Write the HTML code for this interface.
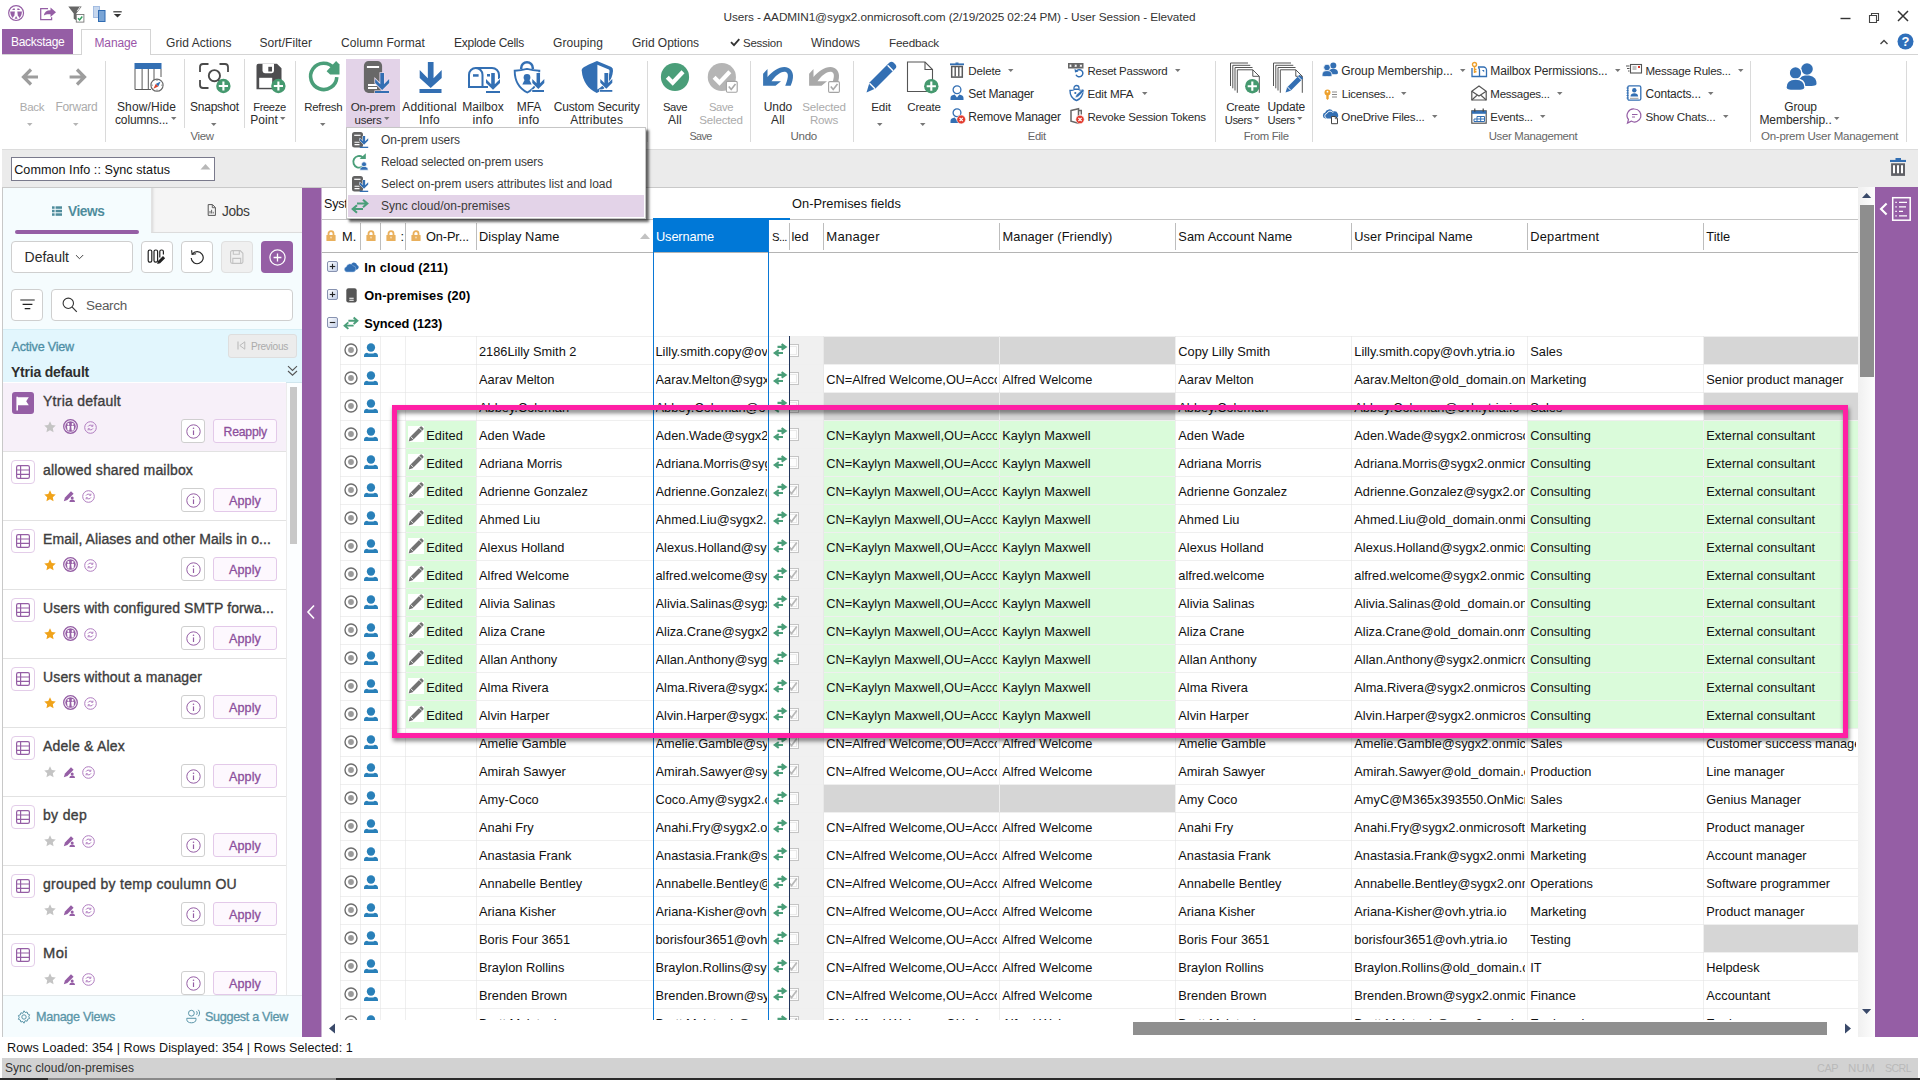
<!DOCTYPE html>
<html lang="en"><head><meta charset="utf-8"><title>Users - User Session</title>
<style>
html,body{margin:0;padding:0;}
body{width:1920px;height:1080px;position:relative;overflow:hidden;background:#fff;font-family:"Liberation Sans",sans-serif;color:#222;}
.a{position:absolute;box-sizing:border-box;}
.t{position:absolute;white-space:nowrap;line-height:16px;height:16px;color:#262626;}
.c{overflow:hidden;}
svg{overflow:visible;}
</style>
</head>
<body>
<div class="t" style="top:9px;font-size:11.8px;letter-spacing:-0.098px;left:723.50px;color:#333;">Users - AADMIN1@sygx2.onmicrosoft.com (2/19/2025 02:24 PM) - User Session - Elevated</div>
<svg class="a" style="left:1838px;top:10px;" width="16" height="16" viewBox="0 0 16 16"><path d="M2.5 8.5h10" stroke="#333" stroke-width="1.4" fill="none"/></svg>
<svg class="a" style="left:1866px;top:9px;" width="16" height="16" viewBox="0 0 16 16"><path d="M3.5 6.5h7v7h-7z M5.5 6.5v-2h7v7h-2" stroke="#444" stroke-width="1.1" fill="none"/></svg>
<svg class="a" style="left:1895px;top:8px;" width="16" height="16" viewBox="0 0 16 16"><path d="M3 3l10 10M13 3L3 13" stroke="#333" stroke-width="1.5" fill="none"/></svg>
<div class="a" style="left:0px;top:54px;width:1918px;height:1px;background:#d4d4d4;"></div>
<div class="a" style="left:2px;top:29px;width:71px;height:25px;background:#955ea5;"></div>
<div class="t" style="top:34px;font-size:12px;letter-spacing:-0.281px;left:11.00px;color:#fff;">Backstage</div>
<div class="a" style="left:81px;top:29px;width:70px;height:26px;background:#fff;border:1px solid #d4d4d4;border-bottom:none;"></div>
<div class="t" style="top:35px;font-size:12px;letter-spacing:-0.144px;left:94.50px;color:#9a55a8;">Manage</div>
<div class="t" style="top:35px;font-size:12px;letter-spacing:0.067px;left:166.00px;color:#333;">Grid Actions</div>
<div class="t" style="top:35px;font-size:12px;letter-spacing:0.045px;left:259.50px;color:#333;">Sort/Filter</div>
<div class="t" style="top:35px;font-size:12px;letter-spacing:0.101px;left:341.00px;color:#333;">Column Format</div>
<div class="t" style="top:35px;font-size:12px;letter-spacing:-0.259px;left:454.00px;color:#333;">Explode Cells</div>
<div class="t" style="top:35px;font-size:12px;letter-spacing:0.079px;left:553.00px;color:#333;">Grouping</div>
<div class="t" style="top:35px;font-size:12px;letter-spacing:-0.030px;left:632.00px;color:#333;">Grid Options</div>
<div class="t" style="top:35px;font-size:11.47px;letter-spacing:-0.258px;left:743.00px;color:#333;">Session</div>
<div class="t" style="top:35px;font-size:12px;letter-spacing:0.046px;left:811.00px;color:#333;">Windows</div>
<div class="t" style="top:35px;font-size:11.69px;letter-spacing:-0.167px;left:889.00px;color:#333;">Feedback</div>
<svg class="a" style="left:729px;top:36px;" width="12" height="12" viewBox="0 0 12 12"><path d="M2 6.2l3 3L10.3 3.2" stroke="#333" stroke-width="1.8" fill="none"/></svg>
<svg class="a" style="left:1878px;top:36px;" width="12" height="12" viewBox="0 0 12 12"><path d="M2.5 8L6 4.5 9.5 8" stroke="#444" stroke-width="1.4" fill="none"/></svg>
<svg class="a" style="left:1897px;top:33px;" width="17" height="17" viewBox="0 0 17 17"><circle cx="8.5" cy="8.5" r="8" fill="#2f6fba"/><text x="8.5" y="13" text-anchor="middle" font-family="Liberation Sans" font-weight="bold" font-size="13" fill="#fff">?</text></svg>
<div class="a" style="left:0px;top:149px;width:1918px;height:39px;background:#ebebeb;border-top:1px solid #dcdcdc;border-bottom:1px solid #c9c9c9;"></div>
<div class="a" style="left:11px;top:157px;width:204px;height:24px;background:#fff;border:1px solid #7a7a8c;"></div>
<div class="t" style="top:162px;font-size:12.6px;letter-spacing:0.048px;left:14.20px;color:#111;">Common Info :: Sync status</div>
<svg class="a" style="left:200px;top:163px;" width="11" height="8" viewBox="0 0 11 8"><path d="M0.5 6.5L5.5 1 10.5 6.5z" fill="#b8b8b8"/></svg>
<svg class="a" style="left:1890px;top:157px;" width="16" height="20" viewBox="0 0 16 20"><rect x="0" y="2.900" width="16" height="2.100" fill="#336fb3"/><rect x="5.500" y="1" width="5.500" height="2.200" fill="#336fb3"/><rect x="1.100" y="6.300" width="13.900" height="12.600" fill="#606166"/><path d="M4 8.200v8M8 8.200v8M12 8.200v8" stroke="#fff" stroke-width="2"/></svg>
<div class="a" style="left:0px;top:1037px;width:1920px;height:21px;background:#fff;"></div>
<div class="t" style="top:1040px;font-size:12.6px;letter-spacing:0.070px;left:7.00px;color:#111;">Rows Loaded: 354 | Rows Displayed: 354 | Rows Selected: 1</div>
<div class="a" style="left:0px;top:1058px;width:1920px;height:20px;background:#d2d2d2;"></div>
<div class="t" style="top:1060px;font-size:12px;letter-spacing:0.043px;left:5.00px;color:#333;">Sync cloud/on-premises</div>
<div class="t" style="top:1060px;font-size:10.84px;letter-spacing:-0.430px;left:1817.00px;color:#b9b9b9;">CAP</div>
<div class="t" style="top:1060px;font-size:11.5px;letter-spacing:0.270px;left:1848.00px;color:#b9b9b9;">NUM</div>
<div class="t" style="top:1060px;font-size:10.59px;letter-spacing:-0.562px;left:1885.00px;color:#b9b9b9;">SCRL</div>
<div class="a" style="left:0px;top:1078px;width:1920px;height:2px;background:#2b2b2b;"></div>
<div class="a" style="left:48px;top:1078px;width:288px;height:2px;background:#8a8a8a;"></div>
<div class="a" style="left:0px;top:29px;width:2px;height:1049px;background:#fff;"></div>
<div class="a" style="left:1918px;top:0px;width:2px;height:1078px;background:#fff;"></div>
<svg class="a" style="left:8px;top:5px;" width="16" height="16" viewBox="0 0 16 16"><circle cx="8.100" cy="8" r="7.450" fill="#fff" stroke="#955ea5" stroke-width="1.150"/><path d="M2.300 6.400H6.900L6.400 10.200 4.700 12.900C3 11 2.300 8.800 2.300 6.400z" fill="#955ea5"/><path d="M13.900 6.400H9.300L9.800 10.200 11.500 12.900C13.200 11 13.900 8.800 13.900 6.400z" fill="#955ea5"/><path d="M4.100 4.900L5.300 3.400H6.900V4.900z" fill="#955ea5"/><path d="M12.100 4.900L10.900 3.400H9.300V4.900z" fill="#955ea5"/><path d="M8.100 11.100L9.600 13.700H6.600z" fill="#955ea5"/></svg>
<svg class="a" style="left:40px;top:6px;" width="17" height="15" viewBox="0 0 17 15"><path d="M8 2.500H.700v11.200h10.900v-2.400" fill="none" stroke="#955ea5" stroke-width="1.250"/><path d="M3.800 9.500c.5-3.500 3-5.300 6.700-5.300V1.500l5.500 4.700-5.500 4.700V8.200c-3-.2-5 .2-6.700 1.300z" fill="#955ea5"/></svg>
<svg class="a" style="left:68px;top:5.5px;" width="17" height="17" viewBox="0 0 17 17"><path d="M0.300 0.500h13.400L8.300 7.500v6.800L5.700 12.800V7.500z" fill="#666"/><path d="M9.200 5.200l2.800-4.200" stroke="#fff" stroke-width=".9"/><rect x="8.300" y="8.500" width="7.600" height="7.600" fill="#fff" stroke="#777" stroke-width=".9"/><path d="M10 12.300l1.600 1.700 2.700-3.500" fill="none" stroke="#2e9e5b" stroke-width="1.400"/></svg>
<svg class="a" style="left:93px;top:6px;" width="13" height="16" viewBox="0 0 13 16"><rect x="0.500" y="0.500" width="6" height="11" fill="#c6d7ee" stroke="#9db9df" stroke-width=".9"/><rect x="5.500" y="4.500" width="6.500" height="11" fill="#7aa5d6" stroke="#2f6bb2" stroke-width="1"/></svg>
<svg class="a" style="left:113px;top:10.5px;" width="9" height="7" viewBox="0 0 9 7"><path d="M0.300 0.800h8.400" stroke="#333" stroke-width="1.200"/><path d="M0.800 3h7.400L4.500 6.500z" fill="#333"/></svg>
<svg class="a" style="left:16px;top:61px;" width="32" height="32" viewBox="0 0 32 32"><path d="M22 16H8.500M15 8.500L7.500 16l7.500 7.500" fill="none" stroke="#9d9d9d" stroke-width="3.2"/></svg>
<div class="t" style="top:99px;font-size:11.5px;letter-spacing:-0.267px;left:19.75px;color:#ababab;">Back</div>
<svg class="a" style="left:27.25px;top:122.5px;" width="5.5" height="3" viewBox="0 0 5.5 3"><path d="M0 0h5.500L2.750 3z" fill="#b5b5b5"/></svg>
<svg class="a" style="left:60.400000000000006px;top:61px;" width="32" height="32" viewBox="0 0 32 32"><path d="M9.600 16H23.500M17 8.500l7.500 7.500-7.500 7.500" fill="none" stroke="#9d9d9d" stroke-width="3.2"/></svg>
<div class="t" style="top:99px;font-size:12px;letter-spacing:-0.287px;left:55.40px;color:#ababab;">Forward</div>
<svg class="a" style="left:73.25px;top:122.5px;" width="5.5" height="3" viewBox="0 0 5.5 3"><path d="M0 0h5.500L2.750 3z" fill="#b5b5b5"/></svg>
<div class="a" style="left:105px;top:61px;width:1px;height:81px;background:#dadada;"></div>
<svg class="a" style="left:131.5px;top:61px;" width="32" height="32" viewBox="0 0 32 32"><rect x="2.500" y="2" width="27" height="6" fill="#336fb3"/><path d="M3 8v20.500h16M29 8v8M10.100 8v20.500M16.300 8v20.500M22 8v11" fill="none" stroke="#5a5a5a" stroke-width="1"/><circle cx="25" cy="24.200" r="6.100" fill="#fff" stroke="#666" stroke-width="1.100"/><path d="M25 18.700v1.200M25 28.500v1.200M19.500 24.200h1.200M29.300 24.200h1.200" stroke="#666" stroke-width=".9"/><path d="M28.600 20.600l-2.300 4.900-2.600-2.600z" fill="#336fb3"/><path d="M21.400 27.800l2.300-4.900 2.600 2.600z" fill="#d8452e"/></svg>
<div class="t" style="top:99px;font-size:12px;letter-spacing:0.108px;left:117.00px;color:#2b2b2b;">Show/Hide</div>
<div class="t" style="top:112px;font-size:12px;letter-spacing:-0.139px;left:115.00px;color:#2b2b2b;">columns...</div>
<svg class="a" style="left:170.95px;top:117.0px;" width="5.5" height="3" viewBox="0 0 5.5 3"><path d="M0 0h5.500L2.750 3z" fill="#777"/></svg>
<div class="a" style="left:184px;top:59px;width:1px;height:69px;background:#dadada;"></div>
<svg class="a" style="left:197.9px;top:61px;" width="32" height="32" viewBox="0 0 32 32"><path d="M2 11V6a3 3 0 0 1 3-3h5.500M21.500 3H27a3 3 0 0 1 3 3v5M2 19v5a3 3 0 0 0 3 3h5.500" fill="none" stroke="#4a4a4a" stroke-width="1.800"/><circle cx="16.400" cy="14.700" r="5.600" fill="none" stroke="#4a4a4a" stroke-width="1.900"/><path d="M20.300 18.800l2 2" stroke="#4a4a4a" stroke-width="1.900"/><circle cx="25.4" cy="25" r="7.2" fill="#45996f"/><path d="M20.8 25h9.2M25.4 20.400000000000002v9.2" stroke="#fff" stroke-width="2.1"/></svg>
<div class="t" style="top:99px;font-size:12px;letter-spacing:-0.238px;left:190.00px;color:#2b2b2b;">Snapshot</div>
<svg class="a" style="left:210.95px;top:122.5px;" width="5.5" height="3" viewBox="0 0 5.5 3"><path d="M0 0h5.500L2.750 3z" fill="#777"/></svg>
<div class="a" style="left:244px;top:59px;width:1px;height:69px;background:#dadada;"></div>
<svg class="a" style="left:254.0px;top:61px;" width="32" height="32" viewBox="0 0 32 32"><path d="M2.500 4.800a2 2 0 0 1 2-2h18.500l4.500 4.500V28.200H2.500z" fill="#4d4d4f"/><path d="M8.500 2.800h11.500v7a2.400 2.400 0 0 1-2.400 2.400h-6.700a2.400 2.400 0 0 1-2.400-2.400z" fill="#fff"/><rect x="14.300" y="5.800" width="3.700" height="4.700" fill="#4d4d4f"/><rect x="5.200" y="16.800" width="13" height="10" fill="#fff"/><circle cx="24.4" cy="25" r="7.2" fill="#45996f"/><path d="M19.8 25h9.2M24.4 20.400000000000002v9.2" stroke="#fff" stroke-width="2.1"/></svg>
<div class="t" style="top:99px;font-size:11.19px;letter-spacing:-0.388px;left:253.25px;color:#2b2b2b;">Freeze</div>
<div class="t" style="top:112px;font-size:12px;letter-spacing:0.070px;left:250.30px;color:#2b2b2b;">Point</div>
<svg class="a" style="left:280.05px;top:117.0px;" width="5.5" height="3" viewBox="0 0 5.5 3"><path d="M0 0h5.500L2.750 3z" fill="#777"/></svg>
<div class="t" style="top:128px;font-size:11.41px;letter-spacing:-0.306px;left:190.50px;color:#666;">View</div>
<div class="a" style="left:295px;top:61px;width:1px;height:81px;background:#dadada;"></div>
<svg class="a" style="left:307.3px;top:61px;" width="32" height="32" viewBox="0 0 32 32"><path d="M27 7.300A13.100 13.100 0 1 0 29.800 16.100" fill="none" stroke="#4a9e79" stroke-width="3.600"/><path d="M19.600 10.200l3.500 3.400h9.400v-10l-3.400-3.600z" fill="#4a9e79"/></svg>
<div class="t" style="top:99px;font-size:11.46px;letter-spacing:-0.261px;left:304.15px;color:#2b2b2b;">Refresh</div>
<svg class="a" style="left:319.75px;top:122.5px;" width="5.5" height="3" viewBox="0 0 5.5 3"><path d="M0 0h5.500L2.750 3z" fill="#777"/></svg>
<div class="a" style="left:346px;top:59px;width:54px;height:69px;background:#e3d3e8;"></div>
<svg class="a" style="left:357px;top:61px;" width="32" height="32" viewBox="0 0 32 32"><rect x="6.900" y="0" width="18.200" height="32" rx="4.700" fill="#686868"/><rect x="9.900" y="5" width="12.200" height="2" fill="#fff"/><rect x="11" y="23" width="9" height="2" fill="#fff"/><rect x="11" y="26" width="9" height="2" fill="#fff"/><path d="M23.30 12.00L27.00 12.00L27.00 23.15L32.15 18.00L32.15 22.00L25.15 29.00L18.15 22.00L18.15 18.00L23.30 23.15z" fill="#336fb3" stroke="#e9dcec" stroke-width="1.6" paint-order="stroke"/><rect x="18" y="30" width="14" height="2" fill="#336fb3" stroke="#e9dcec" stroke-width="1.2" paint-order="stroke"/></svg>
<div class="t" style="top:99px;font-size:11.63px;letter-spacing:-0.198px;left:350.75px;color:#2b2b2b;">On-prem</div>
<div class="t" style="top:112px;font-size:11.51px;letter-spacing:-0.229px;left:354.50px;color:#2b2b2b;">users</div>
<svg class="a" style="left:383.75px;top:117.0px;" width="5.5" height="3" viewBox="0 0 5.5 3"><path d="M0 0h5.500L2.750 3z" fill="#777"/></svg>
<svg class="a" style="left:413.5px;top:61px;" width="32" height="32" viewBox="0 0 32 32"><path d="M13.85 1.00L19.55 1.00L19.55 17.15L27.70 9.00L27.70 17.00L16.70 27.00L5.70 17.00L5.70 9.00L13.85 17.15z" fill="#336fb3"/><rect x="5.5" y="28" width="22.0" height="4" fill="#336fb3"/></svg>
<div class="t" style="top:99px;font-size:12px;letter-spacing:0.179px;left:402.25px;color:#2b2b2b;">Additional</div>
<div class="t" style="top:112px;font-size:12px;letter-spacing:0.246px;left:419.00px;color:#2b2b2b;">Info</div>
<svg class="a" style="left:467px;top:61px;" width="32" height="32" viewBox="0 0 32 32"><path d="M2 26V13.700a6.750 6.750 0 0 1 13.500 0V26z" fill="none" stroke="#336fb3" stroke-width="2"/><path d="M8.700 6.900H25a7 7 0 0 1 7 7V18M15.500 26H21" fill="none" stroke="#336fb3" stroke-width="2"/><rect x="6" y="13.200" width="5.600" height="2.500" fill="#336fb3"/><rect x="20" y="13" width="3" height="2.500" fill="#336fb3"/><path d="M24.20 12.00L27.80 12.00L27.80 23.20L33.00 18.00L33.00 22.00L26.00 28.80L19.00 22.00L19.00 18.00L24.20 23.20z" fill="#336fb3" stroke="#fff" stroke-width="1.6" paint-order="stroke"/><rect x="19" y="30" width="14" height="2" fill="#336fb3"/></svg>
<div class="t" style="top:99px;font-size:12px;letter-spacing:0.021px;left:462.25px;color:#2b2b2b;">Mailbox</div>
<div class="t" style="top:112px;font-size:12.5px;letter-spacing:0.212px;left:472.50px;color:#2b2b2b;">info</div>
<svg class="a" style="left:513px;top:61px;" width="32" height="32" viewBox="0 0 32 32"><path d="M8.200 8V7a5.800 5.800 0 0 1 11.600 0v1" fill="none" stroke="#336fb3" stroke-width="2.500"/><path d="M1.700 9.700Q8 9.300 14 7.900 20 9.300 26.300 9.700C26.300 20 22 27.500 14.300 31.500 6.500 27.500 1.700 20 1.700 9.700z" fill="#fff" stroke="#336fb3" stroke-width="1.900"/><circle cx="14" cy="16.500" r="3.400" fill="#336fb3"/><path d="M9.300 23.600l2.300-4.600h4.800l2.300 4.600z" fill="#336fb3"/><path d="M23.55 12.00L27.05 12.00L27.05 22.25L31.30 18.00L31.30 22.00L25.30 28.00L19.30 22.00L19.30 18.00L23.55 22.25z" fill="#336fb3" stroke="#fff" stroke-width="1.6" paint-order="stroke"/><rect x="19.2" y="29" width="11.8" height="2" fill="#336fb3" stroke="#fff" stroke-width="1.2" paint-order="stroke"/></svg>
<div class="t" style="top:99px;font-size:12px;letter-spacing:-0.056px;left:516.75px;color:#2b2b2b;">MFA</div>
<div class="t" style="top:112px;font-size:12.5px;letter-spacing:0.212px;left:518.50px;color:#2b2b2b;">info</div>
<svg class="a" style="left:580.7px;top:61px;" width="32" height="32" viewBox="0 0 32 32"><path d="M16 0L30.300 5.900Q32.300 6.900 32 10C31 20 25 28 15.800 32 7 28 1.500 20 .800 10 .500 6.900 2.500 5.900 16 0z" fill="#336fb3"/><path d="M16.400 3.700L27.800 8.600Q28.700 9.100 28.500 10.600C28 17 24 24.500 16.400 28.600z" fill="#fff"/><path d="M23.40 12.00L27.20 12.00L27.20 22.10L31.30 18.00L31.30 21.70L25.30 27.70L19.30 21.70L19.30 18.00L23.40 22.10z" fill="#336fb3" stroke="#fff" stroke-width="1.6" paint-order="stroke"/><rect x="18.8" y="29" width="12.5" height="1.8000000000000007" fill="#336fb3" stroke="#fff" stroke-width="1.2" paint-order="stroke"/></svg>
<div class="t" style="top:99px;font-size:12px;letter-spacing:-0.135px;left:553.70px;color:#2b2b2b;">Custom Security</div>
<div class="t" style="top:112px;font-size:12px;letter-spacing:0.231px;left:570.20px;color:#2b2b2b;">Attributes</div>
<div class="a" style="left:647px;top:61px;width:1px;height:81px;background:#dadada;"></div>
<svg class="a" style="left:659px;top:61px;" width="32" height="32" viewBox="0 0 32 32"><circle cx="16" cy="16" r="14.100" fill="#4a9e79"/><path d="M8.300 16.300l5.400 5.400L24 10.800" fill="none" stroke="#fff" stroke-width="4.200"/></svg>
<div class="t" style="top:99px;font-size:11.24px;letter-spacing:-0.405px;left:663.00px;color:#2b2b2b;">Save</div>
<div class="t" style="top:112px;font-size:12px;letter-spacing:0.155px;left:668.10px;color:#2b2b2b;">All</div>
<svg class="a" style="left:706px;top:61px;" width="32" height="32" viewBox="0 0 32 32"><circle cx="15.850" cy="16" r="14.100" fill="#b5b5b5"/><path d="M8.100 16.300l5.400 5.400L23.800 10.800" fill="none" stroke="#fff" stroke-width="4.200"/><rect x="20.400" y="20.400" width="10.8" height="10.8" rx="1.2" fill="#fff" stroke="#a3a3a3" stroke-width="1.1"/><path d="M22.8 25.6l2.4 2.900 4.300-5.600" fill="none" stroke="#a9a9a9" stroke-width="1.600"/></svg>
<div class="t" style="top:99px;font-size:11.24px;letter-spacing:-0.405px;left:709.00px;color:#ababab;">Save</div>
<div class="t" style="top:112px;font-size:11.58px;letter-spacing:-0.196px;left:699.25px;color:#ababab;">Selected</div>
<div class="t" style="top:128px;font-size:10.84px;letter-spacing:-0.602px;left:689.50px;color:#666;">Save</div>
<div class="a" style="left:750px;top:61px;width:1px;height:81px;background:#dadada;"></div>
<svg class="a" style="left:762px;top:61px;" width="32" height="32" viewBox="0 0 32 32"><path d="M5.500 8L1.100 12.800V24.800H13.500L19 20.200H9.500C13 15.500 18 10.800 22.400 10.800 25 10.800 26.300 13 25.800 16 25.400 19 24.300 22 23.200 24.800H28.700C30 21.500 31.200 18 31 14.500 30.800 9.500 27.500 5.900 22.400 5.900 16.500 5.900 10 10.500 5.500 16z" fill="#3a76b4"/></svg>
<div class="t" style="top:99px;font-size:12px;letter-spacing:-0.047px;left:763.75px;color:#2b2b2b;">Undo</div>
<div class="t" style="top:112px;font-size:12px;letter-spacing:0.155px;left:771.10px;color:#2b2b2b;">All</div>
<svg class="a" style="left:808px;top:61px;" width="32" height="32" viewBox="0 0 32 32"><path d="M5.500 8L1.100 12.800V24.800H13.500L19 20.200H9.500C13 15.500 18 10.800 22.400 10.800 25 10.800 26.300 13 25.800 16 25.400 19 24.300 22 23.200 24.800H28.700C30 21.500 31.200 18 31 14.500 30.800 9.500 27.500 5.900 22.400 5.900 16.500 5.900 10 10.500 5.500 16z" fill="#a9a9a9"/><rect x="20.6" y="20.6" width="10.8" height="10.8" rx="1.2" fill="#fff" stroke="#a3a3a3" stroke-width="1.1"/><path d="M22.8 25.6l2.4 2.900 4.300-5.600" fill="none" stroke="#a9a9a9" stroke-width="1.600"/></svg>
<div class="t" style="top:99px;font-size:11.58px;letter-spacing:-0.196px;left:802.25px;color:#ababab;">Selected</div>
<div class="t" style="top:112px;font-size:11.59px;letter-spacing:-0.245px;left:810.00px;color:#ababab;">Rows</div>
<div class="t" style="top:128px;font-size:11.53px;letter-spacing:-0.266px;left:790.50px;color:#666;">Undo</div>
<div class="a" style="left:853px;top:61px;width:1px;height:81px;background:#dadada;"></div>
<svg class="a" style="left:864.5px;top:61px;" width="32" height="32" viewBox="0 0 32 32"><path d="M1.500 31.500l3-10L24.200 1.800a3.300 3.300 0 0 1 4.600 0l1.400 1.400a3.300 3.300 0 0 1 0 4.600L10.500 27.500z" fill="#336fb3"/><path d="M22.600 4.300l5.400 5.400" stroke="#fff" stroke-width="1.400"/><path d="M4.500 22.200l5.500 5.500" stroke="#fff" stroke-width="1.400"/></svg>
<div class="t" style="top:99px;font-size:11.65px;letter-spacing:-0.144px;left:871.25px;color:#2b2b2b;">Edit</div>
<svg class="a" style="left:877.25px;top:122.5px;" width="5.5" height="3" viewBox="0 0 5.5 3"><path d="M0 0h5.500L2.750 3z" fill="#777"/></svg>
<svg class="a" style="left:907px;top:61px;" width="32" height="32" viewBox="0 0 32 32"><path d="M.500 1h17.500l7.500 7.500V30.500H.500z" fill="#fff" stroke="#555" stroke-width="1.100"/><path d="M18 1v7.500h7.500" fill="none" stroke="#555" stroke-width="1.100"/><circle cx="24.3" cy="25.2" r="7.2" fill="#45996f"/><path d="M19.700000000000003 25.2h9.2M24.3 20.6v9.2" stroke="#fff" stroke-width="2.1"/></svg>
<div class="t" style="top:99px;font-size:11.57px;letter-spacing:-0.205px;left:907.25px;color:#2b2b2b;">Create</div>
<svg class="a" style="left:919.75px;top:122.5px;" width="5.5" height="3" viewBox="0 0 5.5 3"><path d="M0 0h5.500L2.750 3z" fill="#777"/></svg>
<svg class="a" style="left:950px;top:62px;" width="16" height="16" viewBox="0 0 16 16"><path d="M0 2.300h14" stroke="#336fb3" stroke-width="1.800"/><path d="M5.500 1.200h3" stroke="#336fb3" stroke-width="1.400"/><rect x="1.700" y="4.500" width="10.600" height="10.600" fill="#fff" stroke="#58595b" stroke-width="1.500"/><path d="M5.200 5v9.500M8.800 5v9.500" stroke="#58595b" stroke-width="1.400"/></svg>
<div class="t" style="top:63px;font-size:11.62px;letter-spacing:-0.182px;left:968.30px;color:#2b2b2b;">Delete</div>
<svg class="a" style="left:1008.05px;top:68.5px;" width="5.5" height="3" viewBox="0 0 5.5 3"><path d="M0 0h5.500L2.750 3z" fill="#777"/></svg>
<svg class="a" style="left:950px;top:85px;" width="16" height="16" viewBox="0 0 16 16"><circle cx="7" cy="4.800" r="3.900" fill="#fff" stroke="#336fb3" stroke-width="1.300"/><path d="M0.500 15v-2.200c0-2 2-3 4.200-3.400L7 12.500l2.300-3.100c2.200.4 4.200 1.400 4.200 3.400V15z" fill="#336fb3"/></svg>
<div class="t" style="top:86px;font-size:12px;letter-spacing:-0.292px;left:968.30px;color:#2b2b2b;">Set Manager</div>
<svg class="a" style="left:950px;top:108px;" width="16" height="16" viewBox="0 0 16 16"><circle cx="7" cy="4.800" r="3.900" fill="#fff" stroke="#336fb3" stroke-width="1.300"/><path d="M0.500 15v-2.200c0-2 2-3 4.200-3.400L7 12.500l2.300-3.100c2.200.4 4.200 1.400 4.200 3.400V15z" fill="#336fb3"/><circle cx="11.2" cy="11.5" r="4.4" fill="#e23b2e" stroke="#fff" stroke-width=".6"/><path d="M9.6 9.9l3.200 3.200M12.799999999999999 9.9l-3.200 3.200" stroke="#fff" stroke-width="1.300"/></svg>
<div class="t" style="top:109px;font-size:12px;letter-spacing:-0.206px;left:968.30px;color:#2b2b2b;">Remove Manager</div>
<svg class="a" style="left:1068px;top:62px;" width="16" height="16" viewBox="0 0 16 16"><rect x="0" y="1" width="15.500" height="5.500" fill="#666"/><path d="M2.500 2.500v2.500M1.400 3.100l2.200 1.300M3.600 3.100L1.400 4.400M7.700 2.500v2.500M6.600 3.100l2.200 1.300M8.800 3.100L6.600 4.400M12.900 2.500v2.500M11.800 3.100l2.200 1.300M14 3.100l-2.200 1.300" stroke="#fff" stroke-width=".8"/><path d="M8.300 9.200a3.600 3.600 0 1 1-.3 3.600" fill="none" stroke="#336fb3" stroke-width="1.500"/><path d="M6.500 6.800l.5 3.700 3.500-.9z" fill="#336fb3"/></svg>
<div class="t" style="top:63px;font-size:11.48px;letter-spacing:-0.256px;left:1087.50px;color:#2b2b2b;">Reset Password</div>
<svg class="a" style="left:1175.25px;top:68.5px;" width="5.5" height="3" viewBox="0 0 5.5 3"><path d="M0 0h5.500L2.750 3z" fill="#777"/></svg>
<svg class="a" style="left:1068.8px;top:85px;" width="16" height="16" viewBox="0 0 16 16"><path d="M5 4V3a2.500 2.500 0 0 1 5 0v1" fill="none" stroke="#336fb3" stroke-width="1.300"/><path d="M1 5.500c2.500 0 4-.6 5-1.300h3c1 .7 2.500 1.300 5 1.300 0 5-2 8.300-6.500 10C3 13.800 1 10.500 1 5.500z" fill="#fff" stroke="#336fb3" stroke-width="1.400"/><path d="M6.200 12.800l.9-2.800 6.500-6 1.800 1.900-6.400 6z" fill="#336fb3" stroke="#fff" stroke-width=".5"/><circle cx="6.300" cy="8" r="1.100" fill="#336fb3"/></svg>
<div class="t" style="top:86px;font-size:11.64px;letter-spacing:-0.177px;left:1087.50px;color:#2b2b2b;">Edit MFA</div>
<svg class="a" style="left:1141.95px;top:91.5px;" width="5.5" height="3" viewBox="0 0 5.5 3"><path d="M0 0h5.500L2.750 3z" fill="#777"/></svg>
<svg class="a" style="left:1068.8px;top:108px;" width="16" height="16" viewBox="0 0 16 16"><path d="M2 2.500L9.500.8v14.400L2 13.200z" fill="#fff" stroke="#666" stroke-width="1.500"/><path d="M9.500 2.500h2.800v4" fill="none" stroke="#666" stroke-width="1.400"/><circle cx="11" cy="11.5" r="4.2" fill="#e23b2e" stroke="#fff" stroke-width=".6"/><path d="M9.4 9.9l3.200 3.200M12.6 9.9l-3.200 3.200" stroke="#fff" stroke-width="1.300"/></svg>
<div class="t" style="top:109px;font-size:11.54px;letter-spacing:-0.221px;left:1087.50px;color:#2b2b2b;">Revoke Session Tokens</div>
<div class="t" style="top:128px;font-size:11.2px;letter-spacing:-0.325px;left:1027.80px;color:#666;">Edit</div>
<div class="a" style="left:1215px;top:61px;width:1px;height:81px;background:#dadada;"></div>
<svg class="a" style="left:1227.5px;top:61px;" width="32" height="32" viewBox="0 0 32 32"><path d="M2.500 25V2H20" fill="none" stroke="#555" stroke-width="1"/><path d="M4.800 27.300V4.300H22.300" fill="none" stroke="#555" stroke-width="1"/><path d="M7 29.500V6.500H24.500" fill="none" stroke="#555" stroke-width="1"/><path d="M9.300 31.800V8.800h15.500l6.500 6.500V31.800" fill="#fff" stroke="#555" stroke-width="1"/><path d="M24.800 8.800v6.500h6.500" fill="none" stroke="#555" stroke-width="1"/><circle cx="24.3" cy="25.2" r="7.2" fill="#45996f"/><path d="M19.700000000000003 25.2h9.2M24.3 20.6v9.2" stroke="#fff" stroke-width="2.1"/></svg>
<div class="t" style="top:99px;font-size:11.61px;letter-spacing:-0.191px;left:1226.15px;color:#2b2b2b;">Create</div>
<div class="t" style="top:112px;font-size:11.2px;letter-spacing:-0.389px;left:1224.70px;color:#2b2b2b;">Users</div>
<svg class="a" style="left:1253.95px;top:117.0px;" width="5.5" height="3" viewBox="0 0 5.5 3"><path d="M0 0h5.500L2.750 3z" fill="#777"/></svg>
<svg class="a" style="left:1270.8px;top:61px;" width="32" height="32" viewBox="0 0 32 32"><path d="M2.500 25V2H20" fill="none" stroke="#555" stroke-width="1"/><path d="M4.800 27.300V4.300H22.300" fill="none" stroke="#555" stroke-width="1"/><path d="M7 29.500V6.500H24.500" fill="none" stroke="#555" stroke-width="1"/><path d="M9.300 31.800V8.800h15.500l6.500 6.500V31.800" fill="#fff" stroke="#555" stroke-width="1"/><path d="M24.800 8.800v6.500h6.500" fill="none" stroke="#555" stroke-width="1"/><path d="M14.500 31.500l1.700-5.200L28.700 13.800l3.500 3.500L19.700 29.800z" fill="#336fb3"/><path d="M16.500 26l3.500 3.500M27 15.500l3.500 3.500" stroke="#fff" stroke-width="1"/></svg>
<div class="t" style="top:99px;font-size:12px;letter-spacing:-0.199px;left:1267.55px;color:#2b2b2b;">Update</div>
<div class="t" style="top:112px;font-size:11.2px;letter-spacing:-0.389px;left:1267.50px;color:#2b2b2b;">Users</div>
<svg class="a" style="left:1297.25px;top:117.0px;" width="5.5" height="3" viewBox="0 0 5.5 3"><path d="M0 0h5.500L2.750 3z" fill="#777"/></svg>
<div class="t" style="top:128px;font-size:11.31px;letter-spacing:-0.306px;left:1243.70px;color:#666;">From File</div>
<div class="a" style="left:1312px;top:61px;width:1px;height:81px;background:#dadada;"></div>
<svg class="a" style="left:1322px;top:62px;" width="16" height="16" viewBox="0 0 16 16"><circle cx="11.300" cy="3.500" r="3" fill="#336fb3"/><path d="M6.500 11c0-3 2-4.300 4.800-4.300s4.700 1.300 4.700 4.300c0 1-1 1.300-4.700 1.300S6.500 12 6.500 11z" fill="#336fb3"/><circle cx="5" cy="5.500" r="3.300" fill="#336fb3" stroke="#fff" stroke-width=".8"/><path d="M0 13.200c0-3.300 2-4.600 5-4.600s5 1.300 5 4.600c0 1.100-1 1.400-5 1.400s-5-.3-5-1.400z" fill="#336fb3" stroke="#fff" stroke-width=".8"/></svg>
<div class="t" style="top:63px;font-size:12px;letter-spacing:-0.064px;left:1341.30px;color:#2b2b2b;">Group Membership...</div>
<svg class="a" style="left:1459.75px;top:68.5px;" width="5.5" height="3" viewBox="0 0 5.5 3"><path d="M0 0h5.500L2.750 3z" fill="#777"/></svg>
<svg class="a" style="left:1322.5px;top:85px;" width="16" height="16" viewBox="0 0 16 16"><circle cx="4.500" cy="7.600" r="3" fill="#eda12e"/><circle cx="4.500" cy="6.700" r=".9" fill="#fff"/><path d="M3.300 9.800h2.400v4L4.500 15l-1.200-1.200z" fill="#eda12e"/><path d="M9 7h5M9 9.500h5M9 12h5" stroke="#8a8a8a" stroke-width="1"/></svg>
<div class="t" style="top:86px;font-size:11.48px;letter-spacing:-0.216px;left:1341.80px;color:#2b2b2b;">Licenses...</div>
<svg class="a" style="left:1400.95px;top:91.5px;" width="5.5" height="3" viewBox="0 0 5.5 3"><path d="M0 0h5.500L2.750 3z" fill="#777"/></svg>
<svg class="a" style="left:1322px;top:108px;" width="16" height="16" viewBox="0 0 16 16"><path d="M3.500 10.500A3 3 0 0 1 3.200 4.600 4.200 4.200 0 0 1 11 3.600a3.300 3.300 0 0 1 2.800 6.900z" fill="#336fb3"/><path d="M4.800 10.500a2.600 2.600 0 0 1 .2-5.100 3.400 3.400 0 0 1 6.200-.5" fill="none" stroke="#fff" stroke-width=".9"/><path d="M9.500 8.500h4l2 2v5.200h-6z" fill="#fff" stroke="#444" stroke-width="1"/><path d="M13.300 8.700v2h2" fill="none" stroke="#444" stroke-width=".8"/></svg>
<div class="t" style="top:109px;font-size:11.59px;letter-spacing:-0.171px;left:1341.30px;color:#2b2b2b;">OneDrive Files...</div>
<svg class="a" style="left:1431.75px;top:114.5px;" width="5.5" height="3" viewBox="0 0 5.5 3"><path d="M0 0h5.500L2.750 3z" fill="#777"/></svg>
<svg class="a" style="left:1471px;top:62px;" width="16" height="16" viewBox="0 0 16 16"><circle cx="3.500" cy="2.500" r="2" fill="none" stroke="#eda12e" stroke-width="1.400"/><path d="M3.500 4.500V11M3.500 7.500h2M3.500 9.800h2" stroke="#eda12e" stroke-width="1.400" fill="none"/><path d="M1 6v8.500h14.500V8a3 3 0 0 0-3-3H7" fill="none" stroke="#336fb3" stroke-width="1.300"/><path d="M8.500 14.500V8a2.500 2.500 0 0 0-1.500-2.500" fill="none" stroke="#336fb3" stroke-width="1.300"/><path d="M10.800 8h2.400v2.200z" fill="#336fb3"/></svg>
<div class="t" style="top:63px;font-size:12px;letter-spacing:-0.129px;left:1490.30px;color:#2b2b2b;">Mailbox Permissions...</div>
<svg class="a" style="left:1614.75px;top:68.5px;" width="5.5" height="3" viewBox="0 0 5.5 3"><path d="M0 0h5.500L2.750 3z" fill="#777"/></svg>
<svg class="a" style="left:1471px;top:85px;" width="16" height="16" viewBox="0 0 16 16"><path d="M0.800 6.200L8 1l7.200 5.200V15H0.800z" fill="#fff" stroke="#555" stroke-width="1.200"/><path d="M0.800 6.200L8 11l7.200-4.800M0.800 15l5.500-5M15.200 15l-5.500-5" fill="none" stroke="#555" stroke-width="1.100"/></svg>
<div class="t" style="top:86px;font-size:11.5px;letter-spacing:-0.236px;left:1490.30px;color:#2b2b2b;">Messages...</div>
<svg class="a" style="left:1556.95px;top:91.5px;" width="5.5" height="3" viewBox="0 0 5.5 3"><path d="M0 0h5.500L2.750 3z" fill="#777"/></svg>
<svg class="a" style="left:1471px;top:108px;" width="16" height="16" viewBox="0 0 16 16"><rect x="0.800" y="2.800" width="14.400" height="12.400" fill="#fff" stroke="#555" stroke-width="1.200"/><rect x="0.800" y="2.800" width="14.400" height="3" fill="#336fb3"/><path d="M3.800 0.500v3.200M12.200 0.500v3.200" stroke="#444" stroke-width="1.200"/><path d="M6 8.500h7.500v5H3v-2.500h10.500M6 8.500v5M9.700 8.500v5" stroke="#336fb3" stroke-width="1" fill="none"/></svg>
<div class="t" style="top:109px;font-size:11.45px;letter-spacing:-0.228px;left:1490.30px;color:#2b2b2b;">Events...</div>
<svg class="a" style="left:1540.05px;top:114.5px;" width="5.5" height="3" viewBox="0 0 5.5 3"><path d="M0 0h5.500L2.750 3z" fill="#777"/></svg>
<svg class="a" style="left:1626.2px;top:62px;" width="16" height="16" viewBox="0 0 16 16"><rect x="4.500" y="2.500" width="11" height="8.500" fill="#fff" stroke="#555" stroke-width="1.100"/><path d="M0 4h3.500M1 6.500h2.500M2 9h1.500" stroke="#555" stroke-width="1.100"/><path d="M6.500 5h4M6.500 7h4" stroke="#777" stroke-width=".9"/><rect x="12" y="4" width="2" height="2" fill="#d8352a"/></svg>
<div class="t" style="top:63px;font-size:11.51px;letter-spacing:-0.226px;left:1645.50px;color:#2b2b2b;">Message Rules...</div>
<svg class="a" style="left:1738.05px;top:68.5px;" width="5.5" height="3" viewBox="0 0 5.5 3"><path d="M0 0h5.500L2.750 3z" fill="#777"/></svg>
<svg class="a" style="left:1626.2px;top:85px;" width="16" height="16" viewBox="0 0 16 16"><rect x="1.800" y="0.800" width="13" height="14.400" rx="1.500" fill="#fff" stroke="#336fb3" stroke-width="1.300"/><path d="M0.500 3h2M0.500 5.500h2M0.500 8h2M0.500 10.500h2M0.500 13h2" stroke="#336fb3" stroke-width=".9"/><circle cx="8.300" cy="5.200" r="2.200" fill="#336fb3"/><path d="M4.500 11.500c0-2.500 1.700-3.300 3.800-3.300s3.800.8 3.800 3.300z" fill="#336fb3"/><path d="M4 13.300h8.500" stroke="#888" stroke-width=".8"/></svg>
<div class="t" style="top:86px;font-size:12px;letter-spacing:-0.187px;left:1645.50px;color:#2b2b2b;">Contacts...</div>
<svg class="a" style="left:1707.75px;top:91.5px;" width="5.5" height="3" viewBox="0 0 5.5 3"><path d="M0 0h5.500L2.750 3z" fill="#777"/></svg>
<svg class="a" style="left:1626.2px;top:108px;" width="16" height="16" viewBox="0 0 16 16"><path d="M8.500 1a6.500 6.500 0 1 1-3.300 12.100L1.500 15l1-3.500A6.500 6.500 0 0 1 8.500 1z" fill="#fff" stroke="#955ea5" stroke-width="1.200"/><path d="M6 6.500h5.500M6 9h3" stroke="#955ea5" stroke-width="1.200"/></svg>
<div class="t" style="top:109px;font-size:11.62px;letter-spacing:-0.180px;left:1645.50px;color:#2b2b2b;">Show Chats...</div>
<svg class="a" style="left:1722.75px;top:114.5px;" width="5.5" height="3" viewBox="0 0 5.5 3"><path d="M0 0h5.500L2.750 3z" fill="#777"/></svg>
<div class="t" style="top:128px;font-size:11.38px;letter-spacing:-0.321px;left:1488.70px;color:#666;">User Management</div>
<div class="a" style="left:1750px;top:61px;width:1px;height:81px;background:#dadada;"></div>
<svg class="a" style="left:1784.5px;top:60.5px;" width="32" height="32" viewBox="0 0 32 32"><circle cx="22" cy="8" r="5.800" fill="#336fb3"/><path d="M12.500 22.500c0-5.500 4-8 9.500-8s9.500 2.500 9.500 8c0 2-2 2.500-9.500 2.500s-9.500-.5-9.500-2.500z" fill="#336fb3"/><circle cx="10.500" cy="12" r="6.300" fill="#336fb3" stroke="#fff" stroke-width="1.300"/><path d="M1 26.500c0-6 4-8.500 9.500-8.500s9.500 2.500 9.500 8.500c0 2.300-2 2.800-9.500 2.800S1 28.800 1 26.500z" fill="#336fb3" stroke="#fff" stroke-width="1.300"/></svg>
<div class="t" style="top:99px;font-size:12px;letter-spacing:-0.210px;left:1784.35px;color:#2b2b2b;">Group</div>
<div class="t" style="top:112px;font-size:12px;letter-spacing:-0.033px;left:1759.40px;color:#2b2b2b;">Membership..</div>
<svg class="a" style="left:1833.75px;top:117.0px;" width="5.5" height="3" viewBox="0 0 5.5 3"><path d="M0 0h5.500L2.750 3z" fill="#777"/></svg>
<div class="t" style="top:128px;font-size:11.5px;letter-spacing:-0.255px;left:1761.00px;color:#666;">On-prem User Management</div>
<div class="a" style="left:1906px;top:61px;width:1px;height:81px;background:#dadada;"></div>
<div class="a" style="left:2px;top:188px;width:1px;height:849px;background:#c8c8c8;"></div>
<div class="a" style="left:3px;top:188px;width:299px;height:849px;background:#f5fcfe;"></div>
<div class="a" style="left:151px;top:188px;width:151px;height:45px;background:#f5f5f5;border-bottom:1px solid #dcdcdc;border-left:1px solid #e2e2e2;box-shadow:inset 3px 0 3px -2px rgba(0,0,0,.12);"></div>
<div class="a" style="left:15px;top:230px;width:124px;height:3.5px;background:#955ea5;border-radius:2px;"></div>
<svg class="a" style="left:52px;top:206px;" width="10" height="10" viewBox="0 0 10 10"><rect x="0" y="0.3" width="2.6" height="2.5" fill="#4f8c9c"/><rect x="0" y="3.8" width="2.6" height="2.5" fill="#4f8c9c"/><rect x="0" y="7.3" width="2.6" height="2.5" fill="#4f8c9c"/><rect x="3.6" y="0.3" width="6.4" height="2.5" fill="#4f8c9c"/><rect x="3.6" y="3.8" width="6.4" height="2.5" fill="#4f8c9c"/><rect x="3.6" y="7.3" width="6.4" height="2.5" fill="#4f8c9c"/></svg>
<div class="t" style="top:204px;font-size:13.71px;letter-spacing:-0.424px;left:68.00px;color:#4f8c9c;font-weight:bold;">Views</div>
<svg class="a" style="left:206.5px;top:204px;" width="9" height="12" viewBox="0 0 9 12"><path d="M1.2 0.6h4.3l2.9 2.9v7.9H1.2z" fill="none" stroke="#555" stroke-width="1"/><path d="M5.3 .8v2.9h2.9" fill="none" stroke="#555" stroke-width=".9"/><path d="M3 9.5V7M4.6 9.5V5.8M6.2 9.5V7.8" stroke="#555" stroke-width=".9"/></svg>
<div class="t" style="top:204px;font-size:13.74px;letter-spacing:-0.381px;left:222.00px;color:#3c3c3c;">Jobs</div>
<div class="a" style="left:11px;top:241px;width:122px;height:32px;background:#fff;border:1px solid #cfcfcf;border-radius:4px;"></div>
<div class="t" style="top:249px;font-size:14px;letter-spacing:0.020px;left:24.50px;color:#2b2b2b;">Default</div>
<svg class="a" style="left:75px;top:254px;" width="9" height="6" viewBox="0 0 9 6"><path d="M0.8 1l3.7 3.7L8.2 1" fill="none" stroke="#444" stroke-width="1"/></svg>
<div class="a" style="left:141px;top:241px;width:32px;height:32px;background:#fff;border:1px solid #cfcfcf;border-radius:4px;"></div>
<svg class="a" style="left:147px;top:249px;" width="20" height="16" viewBox="0 0 20 16"><rect x="1.2" y="1" width="3.6" height="12.2" rx="1.6" fill="none" stroke="#222" stroke-width="1.2"/><rect x="7" y="1" width="3.6" height="12.2" rx="1.6" fill="none" stroke="#222" stroke-width="1.2"/><path d="M12.8 8.5V2.6a1.6 1.6 0 0 1 1.6-1.6h.4a1.6 1.6 0 0 1 1.6 1.6v3" fill="none" stroke="#222" stroke-width="1.2"/><path d="M10.2 15l.8-2.9 5-5 2.1 2.1-5 5z" fill="#222"/></svg>
<div class="a" style="left:181px;top:241px;width:32px;height:32px;background:#fff;border:1px solid #cfcfcf;border-radius:4px;"></div>
<svg class="a" style="left:189px;top:249px;" width="16" height="16" viewBox="0 0 16 16"><path d="M3.3 5.2A6 6 0 1 1 2.2 9" fill="none" stroke="#222" stroke-width="1.15"/><path d="M2.6 1.3l.5 4.1 4-.6" fill="none" stroke="#222" stroke-width="1.15"/></svg>
<div class="a" style="left:221px;top:241px;width:32px;height:32px;background:#f0f0f0;border:1px solid #e0e0e0;border-radius:4px;"></div>
<svg class="a" style="left:230px;top:250px;" width="14" height="14" viewBox="0 0 14 14"><path d="M0.6 2.2A1.6 1.6 0 0 1 2.2 .6h8l2.7 2.7v8.5a1.6 1.6 0 0 1-1.6 1.6h-9.1a1.6 1.6 0 0 1-1.6-1.6z" fill="none" stroke="#c2c2c2" stroke-width="1.1"/><path d="M3.3 .8v3.4h6V.8M2.8 13.2V8.4h7.9v4.8" fill="none" stroke="#c2c2c2" stroke-width="1.1"/></svg>
<div class="a" style="left:261px;top:241px;width:32px;height:32px;background:#955ea5;border-radius:4px;"></div>
<svg class="a" style="left:268.5px;top:248.5px;" width="17" height="17" viewBox="0 0 17 17"><circle cx="8.5" cy="8.5" r="7.6" fill="none" stroke="#fff" stroke-width="1.2"/><path d="M8.5 4.6v7.8M4.6 8.5h7.8" stroke="#fff" stroke-width="1.3"/></svg>
<div class="a" style="left:11px;top:289px;width:32px;height:32px;background:#fff;border:1px solid #cfcfcf;border-radius:4px;"></div>
<svg class="a" style="left:19.5px;top:299px;" width="15" height="11" viewBox="0 0 15 11"><path d="M0.3 1h14.4M2.6 5.3h9.8M4.7 9.6h5.6" stroke="#222" stroke-width="1.2"/></svg>
<div class="a" style="left:51px;top:289px;width:242px;height:32px;background:#fff;border:1px solid #cfcfcf;border-radius:4px;"></div>
<svg class="a" style="left:62px;top:297px;" width="16" height="16" viewBox="0 0 16 16"><circle cx="6.3" cy="6.3" r="5.2" fill="none" stroke="#333" stroke-width="1.1"/><path d="M10.2 10.2l4.6 4.6" stroke="#333" stroke-width="1.2"/></svg>
<div class="t" style="top:298px;font-size:13.46px;letter-spacing:-0.275px;left:86.00px;color:#5a5a5a;">Search</div>
<div class="a" style="left:3px;top:329px;width:299px;height:54px;background:#e2f6fd;border-top:1px solid #d5eef6;border-bottom:1px solid #d0e6ee;"></div>
<div class="t" style="top:339px;font-size:12.6px;letter-spacing:-0.218px;left:11.50px;color:#4e8fa6;-webkit-text-stroke:.3px #4e8fa6;">Active View</div>
<div class="a" style="left:228px;top:334px;width:69px;height:24px;background:#ececec;border:1px solid #dedede;border-radius:3px;"></div>
<svg class="a" style="left:237px;top:341px;" width="9" height="9" viewBox="0 0 9 9"><path d="M1 0.5v8" stroke="#b5b5b5" stroke-width="1"/><path d="M7.8 .8v7.4L2.8 4.5z" fill="none" stroke="#b5b5b5" stroke-width=".9"/></svg>
<div class="t" style="top:339px;font-size:10.13px;letter-spacing:-0.302px;left:251.00px;color:#ababab;">Previous</div>
<div class="t" style="top:364px;font-size:14px;letter-spacing:-0.223px;left:11.00px;color:#2e2e2e;font-weight:bold;">Ytria default</div>
<svg class="a" style="left:286.5px;top:365px;" width="11" height="12" viewBox="0 0 11 12"><path d="M1 1.2l4.5 4.2L10 1.2M1 6l4.5 4.2L10 6" fill="none" stroke="#555" stroke-width="1.1"/></svg>
<div class="a" style="left:3px;top:382px;width:283px;height:613px;background:#fff;"></div>
<div class="a" style="left:286px;top:383px;width:15px;height:612px;background:#fcfeff;border-left:1px solid #ececec;"></div>
<div class="a" style="left:290px;top:387px;width:7px;height:157px;background:#c8c8c8;"></div>
<div class="a" style="left:3px;top:383px;width:283px;height:68px;background:#f7f0f9;"></div>
<div class="a" style="left:3px;top:451px;width:283px;height:1px;background:#e2e2e2;"></div>
<div class="a" style="left:12px;top:392px;width:22px;height:22px;background:#955ea5;border-radius:3px;"></div>
<svg class="a" style="left:16px;top:395.5px;" width="14" height="15" viewBox="0 0 14 15"><path d="M1.2 14.5V.8" stroke="#fff" stroke-width="1.6"/><path d="M1.8 1.2h11l-2.6 4 2.6 4h-11z" fill="#fff"/></svg>
<div class="t" style="top:393px;font-size:14px;letter-spacing:0.253px;left:43.00px;color:#3d3d3d;-webkit-text-stroke:.35px #3d3d3d;">Ytria default</div>
<svg class="a" style="left:43.8px;top:421px;" width="12" height="12" viewBox="0 0 12 12"><path d="M6 0.3l1.75 3.7 4 .5-2.95 2.75.75 4L6 9.3 2.45 11.25l.75-4L.25 4.5l4-.5z" fill="#c4c4c4"/></svg>
<svg class="a" style="left:62.5px;top:419.3px;" width="15" height="15" viewBox="0 0 15 15"><circle cx="7.5" cy="7.5" r="6.8" fill="none" stroke="#955ea5" stroke-width="1.3"/><circle cx="7.5" cy="7.5" r="5.2" fill="#955ea5"/><circle cx="5.4" cy="5" r="1" fill="#fff"/><circle cx="9.6" cy="5" r="1" fill="#fff"/><path d="M4 7.2c.5-1 2.3-1 2.8 0l-.5 4.3H4.6zM8.2 7.2c.5-1 2.3-1 2.8 0l-.4 4.3H8.7z" fill="#fff"/></svg>
<svg class="a" style="left:83.5px;top:420.5px;" width="13" height="13" viewBox="0 0 13 13"><circle cx="6.5" cy="6.5" r="5.8" fill="none" stroke="#b07cc0" stroke-width="1"/><path d="M4 5.6c.8-1.7 3.2-2 4.6-.6M9 7.4c-.8 1.7-3.2 2-4.6.6" fill="none" stroke="#b07cc0" stroke-width="1"/><path d="M8.9 3.6v1.7H7.2M4.1 9.4V7.7h1.7" fill="none" stroke="#b07cc0" stroke-width=".9"/></svg>
<div class="a" style="left:181px;top:419px;width:24px;height:24px;background:#fff;border:1px solid #cfcfcf;border-radius:3px;"></div>
<svg class="a" style="left:185.5px;top:423.5px;" width="15" height="15" viewBox="0 0 15 15"><circle cx="7.5" cy="7.5" r="6.7" fill="none" stroke="#955ea5" stroke-width="1"/><path d="M7.5 6.4v4.6" stroke="#955ea5" stroke-width="1.2"/><circle cx="7.5" cy="4.3" r=".8" fill="#955ea5"/></svg>
<div class="a" style="left:213px;top:419px;width:64px;height:24px;background:#fdf8fe;border:1px solid #e3c9e9;border-radius:3px;"></div>
<div class="t" style="top:424px;font-size:12.22px;letter-spacing:-0.191px;left:223.50px;color:#8c4f9c;-webkit-text-stroke:.3px #8c4f9c;">Reapply</div>
<div class="a" style="left:3px;top:520px;width:283px;height:1px;background:#e2e2e2;"></div>
<div class="a" style="left:11px;top:460px;width:24px;height:24px;background:#fff;border:1px solid #e3cde9;border-radius:4px;"></div>
<svg class="a" style="left:16px;top:465px;" width="14" height="14" viewBox="0 0 14 14"><rect x="0.6" y="0.6" width="12.8" height="12.8" rx="1.6" fill="none" stroke="#955ea5" stroke-width="1.2"/><path d="M0.6 5h12.8M0.6 9.3h12.8M4.6 .6v12.8" stroke="#955ea5" stroke-width="1.2"/></svg>
<div class="t" style="top:462px;font-size:14px;letter-spacing:0.168px;left:43.00px;color:#3d3d3d;-webkit-text-stroke:.35px #3d3d3d;">allowed shared mailbox</div>
<svg class="a" style="left:43.8px;top:490px;" width="12" height="12" viewBox="0 0 12 12"><path d="M6 0.3l1.75 3.7 4 .5-2.95 2.75.75 4L6 9.3 2.45 11.25l.75-4L.25 4.5l4-.5z" fill="#f0a31a"/></svg>
<svg class="a" style="left:63px;top:489.5px;" width="12" height="13" viewBox="0 0 12 13"><path d="M0.8 11.2l1.2-3.6 6-6.4 2.6 2.5-6.2 6.3z" fill="#955ea5"/><circle cx="9.2" cy="8" r="1.5" fill="#955ea5"/><path d="M6.4 12c0-2 1.4-2.6 2.8-2.6s2.8 .6 2.8 2.6z" fill="#955ea5"/></svg>
<svg class="a" style="left:81.5px;top:489.5px;" width="13" height="13" viewBox="0 0 13 13"><circle cx="6.5" cy="6.5" r="5.8" fill="none" stroke="#b07cc0" stroke-width="1"/><path d="M4 5.6c.8-1.7 3.2-2 4.6-.6M9 7.4c-.8 1.7-3.2 2-4.6.6" fill="none" stroke="#b07cc0" stroke-width="1"/><path d="M8.9 3.6v1.7H7.2M4.1 9.4V7.7h1.7" fill="none" stroke="#b07cc0" stroke-width=".9"/></svg>
<div class="a" style="left:181px;top:488px;width:24px;height:24px;background:#fff;border:1px solid #cfcfcf;border-radius:3px;"></div>
<svg class="a" style="left:185.5px;top:492.5px;" width="15" height="15" viewBox="0 0 15 15"><circle cx="7.5" cy="7.5" r="6.7" fill="none" stroke="#955ea5" stroke-width="1"/><path d="M7.5 6.4v4.6" stroke="#955ea5" stroke-width="1.2"/><circle cx="7.5" cy="4.3" r=".8" fill="#955ea5"/></svg>
<div class="a" style="left:213px;top:488px;width:64px;height:24px;background:#fdf8fe;border:1px solid #e3c9e9;border-radius:3px;"></div>
<div class="t" style="top:493px;font-size:12.6px;letter-spacing:0.096px;left:229.00px;color:#8c4f9c;-webkit-text-stroke:.3px #8c4f9c;">Apply</div>
<div class="a" style="left:3px;top:589px;width:283px;height:1px;background:#e2e2e2;"></div>
<div class="a" style="left:11px;top:529px;width:24px;height:24px;background:#fff;border:1px solid #e3cde9;border-radius:4px;"></div>
<svg class="a" style="left:16px;top:534px;" width="14" height="14" viewBox="0 0 14 14"><rect x="0.6" y="0.6" width="12.8" height="12.8" rx="1.6" fill="none" stroke="#955ea5" stroke-width="1.2"/><path d="M0.6 5h12.8M0.6 9.3h12.8M4.6 .6v12.8" stroke="#955ea5" stroke-width="1.2"/></svg>
<div class="t" style="top:531px;font-size:14px;letter-spacing:0.082px;left:43.00px;color:#3d3d3d;-webkit-text-stroke:.35px #3d3d3d;">Email, Aliases and other Mails in o...</div>
<svg class="a" style="left:43.8px;top:559px;" width="12" height="12" viewBox="0 0 12 12"><path d="M6 0.3l1.75 3.7 4 .5-2.95 2.75.75 4L6 9.3 2.45 11.25l.75-4L.25 4.5l4-.5z" fill="#f0a31a"/></svg>
<svg class="a" style="left:62.5px;top:557.3px;" width="15" height="15" viewBox="0 0 15 15"><circle cx="7.5" cy="7.5" r="6.8" fill="none" stroke="#955ea5" stroke-width="1.3"/><circle cx="7.5" cy="7.5" r="5.2" fill="#955ea5"/><circle cx="5.4" cy="5" r="1" fill="#fff"/><circle cx="9.6" cy="5" r="1" fill="#fff"/><path d="M4 7.2c.5-1 2.3-1 2.8 0l-.5 4.3H4.6zM8.2 7.2c.5-1 2.3-1 2.8 0l-.4 4.3H8.7z" fill="#fff"/></svg>
<svg class="a" style="left:83.5px;top:558.5px;" width="13" height="13" viewBox="0 0 13 13"><circle cx="6.5" cy="6.5" r="5.8" fill="none" stroke="#b07cc0" stroke-width="1"/><path d="M4 5.6c.8-1.7 3.2-2 4.6-.6M9 7.4c-.8 1.7-3.2 2-4.6.6" fill="none" stroke="#b07cc0" stroke-width="1"/><path d="M8.9 3.6v1.7H7.2M4.1 9.4V7.7h1.7" fill="none" stroke="#b07cc0" stroke-width=".9"/></svg>
<div class="a" style="left:181px;top:557px;width:24px;height:24px;background:#fff;border:1px solid #cfcfcf;border-radius:3px;"></div>
<svg class="a" style="left:185.5px;top:561.5px;" width="15" height="15" viewBox="0 0 15 15"><circle cx="7.5" cy="7.5" r="6.7" fill="none" stroke="#955ea5" stroke-width="1"/><path d="M7.5 6.4v4.6" stroke="#955ea5" stroke-width="1.2"/><circle cx="7.5" cy="4.3" r=".8" fill="#955ea5"/></svg>
<div class="a" style="left:213px;top:557px;width:64px;height:24px;background:#fdf8fe;border:1px solid #e3c9e9;border-radius:3px;"></div>
<div class="t" style="top:562px;font-size:12.6px;letter-spacing:0.096px;left:229.00px;color:#8c4f9c;-webkit-text-stroke:.3px #8c4f9c;">Apply</div>
<div class="a" style="left:3px;top:658px;width:283px;height:1px;background:#e2e2e2;"></div>
<div class="a" style="left:11px;top:598px;width:24px;height:24px;background:#fff;border:1px solid #e3cde9;border-radius:4px;"></div>
<svg class="a" style="left:16px;top:603px;" width="14" height="14" viewBox="0 0 14 14"><rect x="0.6" y="0.6" width="12.8" height="12.8" rx="1.6" fill="none" stroke="#955ea5" stroke-width="1.2"/><path d="M0.6 5h12.8M0.6 9.3h12.8M4.6 .6v12.8" stroke="#955ea5" stroke-width="1.2"/></svg>
<div class="t" style="top:600px;font-size:14px;letter-spacing:0.116px;left:43.00px;color:#3d3d3d;-webkit-text-stroke:.35px #3d3d3d;">Users with configured SMTP forwa...</div>
<svg class="a" style="left:43.8px;top:628px;" width="12" height="12" viewBox="0 0 12 12"><path d="M6 0.3l1.75 3.7 4 .5-2.95 2.75.75 4L6 9.3 2.45 11.25l.75-4L.25 4.5l4-.5z" fill="#f0a31a"/></svg>
<svg class="a" style="left:62.5px;top:626.3px;" width="15" height="15" viewBox="0 0 15 15"><circle cx="7.5" cy="7.5" r="6.8" fill="none" stroke="#955ea5" stroke-width="1.3"/><circle cx="7.5" cy="7.5" r="5.2" fill="#955ea5"/><circle cx="5.4" cy="5" r="1" fill="#fff"/><circle cx="9.6" cy="5" r="1" fill="#fff"/><path d="M4 7.2c.5-1 2.3-1 2.8 0l-.5 4.3H4.6zM8.2 7.2c.5-1 2.3-1 2.8 0l-.4 4.3H8.7z" fill="#fff"/></svg>
<svg class="a" style="left:83.5px;top:627.5px;" width="13" height="13" viewBox="0 0 13 13"><circle cx="6.5" cy="6.5" r="5.8" fill="none" stroke="#b07cc0" stroke-width="1"/><path d="M4 5.6c.8-1.7 3.2-2 4.6-.6M9 7.4c-.8 1.7-3.2 2-4.6.6" fill="none" stroke="#b07cc0" stroke-width="1"/><path d="M8.9 3.6v1.7H7.2M4.1 9.4V7.7h1.7" fill="none" stroke="#b07cc0" stroke-width=".9"/></svg>
<div class="a" style="left:181px;top:626px;width:24px;height:24px;background:#fff;border:1px solid #cfcfcf;border-radius:3px;"></div>
<svg class="a" style="left:185.5px;top:630.5px;" width="15" height="15" viewBox="0 0 15 15"><circle cx="7.5" cy="7.5" r="6.7" fill="none" stroke="#955ea5" stroke-width="1"/><path d="M7.5 6.4v4.6" stroke="#955ea5" stroke-width="1.2"/><circle cx="7.5" cy="4.3" r=".8" fill="#955ea5"/></svg>
<div class="a" style="left:213px;top:626px;width:64px;height:24px;background:#fdf8fe;border:1px solid #e3c9e9;border-radius:3px;"></div>
<div class="t" style="top:631px;font-size:12.6px;letter-spacing:0.096px;left:229.00px;color:#8c4f9c;-webkit-text-stroke:.3px #8c4f9c;">Apply</div>
<div class="a" style="left:3px;top:727px;width:283px;height:1px;background:#e2e2e2;"></div>
<div class="a" style="left:11px;top:667px;width:24px;height:24px;background:#fff;border:1px solid #e3cde9;border-radius:4px;"></div>
<svg class="a" style="left:16px;top:672px;" width="14" height="14" viewBox="0 0 14 14"><rect x="0.6" y="0.6" width="12.8" height="12.8" rx="1.6" fill="none" stroke="#955ea5" stroke-width="1.2"/><path d="M0.6 5h12.8M0.6 9.3h12.8M4.6 .6v12.8" stroke="#955ea5" stroke-width="1.2"/></svg>
<div class="t" style="top:669px;font-size:14px;letter-spacing:0.147px;left:43.00px;color:#3d3d3d;-webkit-text-stroke:.35px #3d3d3d;">Users without a manager</div>
<svg class="a" style="left:43.8px;top:697px;" width="12" height="12" viewBox="0 0 12 12"><path d="M6 0.3l1.75 3.7 4 .5-2.95 2.75.75 4L6 9.3 2.45 11.25l.75-4L.25 4.5l4-.5z" fill="#f0a31a"/></svg>
<svg class="a" style="left:62.5px;top:695.3px;" width="15" height="15" viewBox="0 0 15 15"><circle cx="7.5" cy="7.5" r="6.8" fill="none" stroke="#955ea5" stroke-width="1.3"/><circle cx="7.5" cy="7.5" r="5.2" fill="#955ea5"/><circle cx="5.4" cy="5" r="1" fill="#fff"/><circle cx="9.6" cy="5" r="1" fill="#fff"/><path d="M4 7.2c.5-1 2.3-1 2.8 0l-.5 4.3H4.6zM8.2 7.2c.5-1 2.3-1 2.8 0l-.4 4.3H8.7z" fill="#fff"/></svg>
<svg class="a" style="left:83.5px;top:696.5px;" width="13" height="13" viewBox="0 0 13 13"><circle cx="6.5" cy="6.5" r="5.8" fill="none" stroke="#b07cc0" stroke-width="1"/><path d="M4 5.6c.8-1.7 3.2-2 4.6-.6M9 7.4c-.8 1.7-3.2 2-4.6.6" fill="none" stroke="#b07cc0" stroke-width="1"/><path d="M8.9 3.6v1.7H7.2M4.1 9.4V7.7h1.7" fill="none" stroke="#b07cc0" stroke-width=".9"/></svg>
<div class="a" style="left:181px;top:695px;width:24px;height:24px;background:#fff;border:1px solid #cfcfcf;border-radius:3px;"></div>
<svg class="a" style="left:185.5px;top:699.5px;" width="15" height="15" viewBox="0 0 15 15"><circle cx="7.5" cy="7.5" r="6.7" fill="none" stroke="#955ea5" stroke-width="1"/><path d="M7.5 6.4v4.6" stroke="#955ea5" stroke-width="1.2"/><circle cx="7.5" cy="4.3" r=".8" fill="#955ea5"/></svg>
<div class="a" style="left:213px;top:695px;width:64px;height:24px;background:#fdf8fe;border:1px solid #e3c9e9;border-radius:3px;"></div>
<div class="t" style="top:700px;font-size:12.6px;letter-spacing:0.096px;left:229.00px;color:#8c4f9c;-webkit-text-stroke:.3px #8c4f9c;">Apply</div>
<div class="a" style="left:3px;top:796px;width:283px;height:1px;background:#e2e2e2;"></div>
<div class="a" style="left:11px;top:736px;width:24px;height:24px;background:#fff;border:1px solid #e3cde9;border-radius:4px;"></div>
<svg class="a" style="left:16px;top:741px;" width="14" height="14" viewBox="0 0 14 14"><rect x="0.6" y="0.6" width="12.8" height="12.8" rx="1.6" fill="none" stroke="#955ea5" stroke-width="1.2"/><path d="M0.6 5h12.8M0.6 9.3h12.8M4.6 .6v12.8" stroke="#955ea5" stroke-width="1.2"/></svg>
<div class="t" style="top:738px;font-size:14px;letter-spacing:0.218px;left:43.00px;color:#3d3d3d;-webkit-text-stroke:.35px #3d3d3d;">Adele &amp; Alex</div>
<svg class="a" style="left:43.8px;top:766px;" width="12" height="12" viewBox="0 0 12 12"><path d="M6 0.3l1.75 3.7 4 .5-2.95 2.75.75 4L6 9.3 2.45 11.25l.75-4L.25 4.5l4-.5z" fill="#c4c4c4"/></svg>
<svg class="a" style="left:63px;top:765.5px;" width="12" height="13" viewBox="0 0 12 13"><path d="M0.8 11.2l1.2-3.6 6-6.4 2.6 2.5-6.2 6.3z" fill="#955ea5"/><circle cx="9.2" cy="8" r="1.5" fill="#955ea5"/><path d="M6.4 12c0-2 1.4-2.6 2.8-2.6s2.8 .6 2.8 2.6z" fill="#955ea5"/></svg>
<svg class="a" style="left:81.5px;top:765.5px;" width="13" height="13" viewBox="0 0 13 13"><circle cx="6.5" cy="6.5" r="5.8" fill="none" stroke="#b07cc0" stroke-width="1"/><path d="M4 5.6c.8-1.7 3.2-2 4.6-.6M9 7.4c-.8 1.7-3.2 2-4.6.6" fill="none" stroke="#b07cc0" stroke-width="1"/><path d="M8.9 3.6v1.7H7.2M4.1 9.4V7.7h1.7" fill="none" stroke="#b07cc0" stroke-width=".9"/></svg>
<div class="a" style="left:181px;top:764px;width:24px;height:24px;background:#fff;border:1px solid #cfcfcf;border-radius:3px;"></div>
<svg class="a" style="left:185.5px;top:768.5px;" width="15" height="15" viewBox="0 0 15 15"><circle cx="7.5" cy="7.5" r="6.7" fill="none" stroke="#955ea5" stroke-width="1"/><path d="M7.5 6.4v4.6" stroke="#955ea5" stroke-width="1.2"/><circle cx="7.5" cy="4.3" r=".8" fill="#955ea5"/></svg>
<div class="a" style="left:213px;top:764px;width:64px;height:24px;background:#fdf8fe;border:1px solid #e3c9e9;border-radius:3px;"></div>
<div class="t" style="top:769px;font-size:12.6px;letter-spacing:0.096px;left:229.00px;color:#8c4f9c;-webkit-text-stroke:.3px #8c4f9c;">Apply</div>
<div class="a" style="left:3px;top:865px;width:283px;height:1px;background:#e2e2e2;"></div>
<div class="a" style="left:11px;top:805px;width:24px;height:24px;background:#fff;border:1px solid #e3cde9;border-radius:4px;"></div>
<svg class="a" style="left:16px;top:810px;" width="14" height="14" viewBox="0 0 14 14"><rect x="0.6" y="0.6" width="12.8" height="12.8" rx="1.6" fill="none" stroke="#955ea5" stroke-width="1.2"/><path d="M0.6 5h12.8M0.6 9.3h12.8M4.6 .6v12.8" stroke="#955ea5" stroke-width="1.2"/></svg>
<div class="t" style="top:807px;font-size:14px;letter-spacing:0.328px;left:43.00px;color:#3d3d3d;-webkit-text-stroke:.35px #3d3d3d;">by dep</div>
<svg class="a" style="left:43.8px;top:835px;" width="12" height="12" viewBox="0 0 12 12"><path d="M6 0.3l1.75 3.7 4 .5-2.95 2.75.75 4L6 9.3 2.45 11.25l.75-4L.25 4.5l4-.5z" fill="#c4c4c4"/></svg>
<svg class="a" style="left:63px;top:834.5px;" width="12" height="13" viewBox="0 0 12 13"><path d="M0.8 11.2l1.2-3.6 6-6.4 2.6 2.5-6.2 6.3z" fill="#955ea5"/><circle cx="9.2" cy="8" r="1.5" fill="#955ea5"/><path d="M6.4 12c0-2 1.4-2.6 2.8-2.6s2.8 .6 2.8 2.6z" fill="#955ea5"/></svg>
<svg class="a" style="left:81.5px;top:834.5px;" width="13" height="13" viewBox="0 0 13 13"><circle cx="6.5" cy="6.5" r="5.8" fill="none" stroke="#b07cc0" stroke-width="1"/><path d="M4 5.6c.8-1.7 3.2-2 4.6-.6M9 7.4c-.8 1.7-3.2 2-4.6.6" fill="none" stroke="#b07cc0" stroke-width="1"/><path d="M8.9 3.6v1.7H7.2M4.1 9.4V7.7h1.7" fill="none" stroke="#b07cc0" stroke-width=".9"/></svg>
<div class="a" style="left:181px;top:833px;width:24px;height:24px;background:#fff;border:1px solid #cfcfcf;border-radius:3px;"></div>
<svg class="a" style="left:185.5px;top:837.5px;" width="15" height="15" viewBox="0 0 15 15"><circle cx="7.5" cy="7.5" r="6.7" fill="none" stroke="#955ea5" stroke-width="1"/><path d="M7.5 6.4v4.6" stroke="#955ea5" stroke-width="1.2"/><circle cx="7.5" cy="4.3" r=".8" fill="#955ea5"/></svg>
<div class="a" style="left:213px;top:833px;width:64px;height:24px;background:#fdf8fe;border:1px solid #e3c9e9;border-radius:3px;"></div>
<div class="t" style="top:838px;font-size:12.6px;letter-spacing:0.096px;left:229.00px;color:#8c4f9c;-webkit-text-stroke:.3px #8c4f9c;">Apply</div>
<div class="a" style="left:3px;top:934px;width:283px;height:1px;background:#e2e2e2;"></div>
<div class="a" style="left:11px;top:874px;width:24px;height:24px;background:#fff;border:1px solid #e3cde9;border-radius:4px;"></div>
<svg class="a" style="left:16px;top:879px;" width="14" height="14" viewBox="0 0 14 14"><rect x="0.6" y="0.6" width="12.8" height="12.8" rx="1.6" fill="none" stroke="#955ea5" stroke-width="1.2"/><path d="M0.6 5h12.8M0.6 9.3h12.8M4.6 .6v12.8" stroke="#955ea5" stroke-width="1.2"/></svg>
<div class="t" style="top:876px;font-size:14px;letter-spacing:0.278px;left:43.00px;color:#3d3d3d;-webkit-text-stroke:.35px #3d3d3d;">grouped by temp coulumn OU</div>
<svg class="a" style="left:43.8px;top:904px;" width="12" height="12" viewBox="0 0 12 12"><path d="M6 0.3l1.75 3.7 4 .5-2.95 2.75.75 4L6 9.3 2.45 11.25l.75-4L.25 4.5l4-.5z" fill="#c4c4c4"/></svg>
<svg class="a" style="left:63px;top:903.5px;" width="12" height="13" viewBox="0 0 12 13"><path d="M0.8 11.2l1.2-3.6 6-6.4 2.6 2.5-6.2 6.3z" fill="#955ea5"/><circle cx="9.2" cy="8" r="1.5" fill="#955ea5"/><path d="M6.4 12c0-2 1.4-2.6 2.8-2.6s2.8 .6 2.8 2.6z" fill="#955ea5"/></svg>
<svg class="a" style="left:81.5px;top:903.5px;" width="13" height="13" viewBox="0 0 13 13"><circle cx="6.5" cy="6.5" r="5.8" fill="none" stroke="#b07cc0" stroke-width="1"/><path d="M4 5.6c.8-1.7 3.2-2 4.6-.6M9 7.4c-.8 1.7-3.2 2-4.6.6" fill="none" stroke="#b07cc0" stroke-width="1"/><path d="M8.9 3.6v1.7H7.2M4.1 9.4V7.7h1.7" fill="none" stroke="#b07cc0" stroke-width=".9"/></svg>
<div class="a" style="left:181px;top:902px;width:24px;height:24px;background:#fff;border:1px solid #cfcfcf;border-radius:3px;"></div>
<svg class="a" style="left:185.5px;top:906.5px;" width="15" height="15" viewBox="0 0 15 15"><circle cx="7.5" cy="7.5" r="6.7" fill="none" stroke="#955ea5" stroke-width="1"/><path d="M7.5 6.4v4.6" stroke="#955ea5" stroke-width="1.2"/><circle cx="7.5" cy="4.3" r=".8" fill="#955ea5"/></svg>
<div class="a" style="left:213px;top:902px;width:64px;height:24px;background:#fdf8fe;border:1px solid #e3c9e9;border-radius:3px;"></div>
<div class="t" style="top:907px;font-size:12.6px;letter-spacing:0.096px;left:229.00px;color:#8c4f9c;-webkit-text-stroke:.3px #8c4f9c;">Apply</div>
<div class="a" style="left:3px;top:1003px;width:283px;height:1px;background:#e2e2e2;"></div>
<div class="a" style="left:11px;top:943px;width:24px;height:24px;background:#fff;border:1px solid #e3cde9;border-radius:4px;"></div>
<svg class="a" style="left:16px;top:948px;" width="14" height="14" viewBox="0 0 14 14"><rect x="0.6" y="0.6" width="12.8" height="12.8" rx="1.6" fill="none" stroke="#955ea5" stroke-width="1.2"/><path d="M0.6 5h12.8M0.6 9.3h12.8M4.6 .6v12.8" stroke="#955ea5" stroke-width="1.2"/></svg>
<div class="t" style="top:945px;font-size:14.74px;letter-spacing:0.416px;left:43.00px;color:#3d3d3d;-webkit-text-stroke:.35px #3d3d3d;">Moi</div>
<svg class="a" style="left:43.8px;top:973px;" width="12" height="12" viewBox="0 0 12 12"><path d="M6 0.3l1.75 3.7 4 .5-2.95 2.75.75 4L6 9.3 2.45 11.25l.75-4L.25 4.5l4-.5z" fill="#c4c4c4"/></svg>
<svg class="a" style="left:63px;top:972.5px;" width="12" height="13" viewBox="0 0 12 13"><path d="M0.8 11.2l1.2-3.6 6-6.4 2.6 2.5-6.2 6.3z" fill="#955ea5"/><circle cx="9.2" cy="8" r="1.5" fill="#955ea5"/><path d="M6.4 12c0-2 1.4-2.6 2.8-2.6s2.8 .6 2.8 2.6z" fill="#955ea5"/></svg>
<svg class="a" style="left:81.5px;top:972.5px;" width="13" height="13" viewBox="0 0 13 13"><circle cx="6.5" cy="6.5" r="5.8" fill="none" stroke="#b07cc0" stroke-width="1"/><path d="M4 5.6c.8-1.7 3.2-2 4.6-.6M9 7.4c-.8 1.7-3.2 2-4.6.6" fill="none" stroke="#b07cc0" stroke-width="1"/><path d="M8.9 3.6v1.7H7.2M4.1 9.4V7.7h1.7" fill="none" stroke="#b07cc0" stroke-width=".9"/></svg>
<div class="a" style="left:181px;top:971px;width:24px;height:24px;background:#fff;border:1px solid #cfcfcf;border-radius:3px;"></div>
<svg class="a" style="left:185.5px;top:975.5px;" width="15" height="15" viewBox="0 0 15 15"><circle cx="7.5" cy="7.5" r="6.7" fill="none" stroke="#955ea5" stroke-width="1"/><path d="M7.5 6.4v4.6" stroke="#955ea5" stroke-width="1.2"/><circle cx="7.5" cy="4.3" r=".8" fill="#955ea5"/></svg>
<div class="a" style="left:213px;top:971px;width:64px;height:24px;background:#fdf8fe;border:1px solid #e3c9e9;border-radius:3px;"></div>
<div class="t" style="top:976px;font-size:12.6px;letter-spacing:0.096px;left:229.00px;color:#8c4f9c;-webkit-text-stroke:.3px #8c4f9c;">Apply</div>
<div class="a" style="left:3px;top:995px;width:299px;height:42px;background:#f5fcfe;border-top:1px solid #e2e8ea;"></div>
<svg class="a" style="left:17px;top:1009.5px;" width="14" height="14" viewBox="0 0 14 14"><circle cx="7" cy="7" r="2.2" fill="none" stroke="#5a95a8" stroke-width="1"/><path d="M7 .8l1.1 1.7 2-.5.6 2 1.9.7-.8 1.9.8 1.9-1.9.7-.6 2-2-.5L7 13.2l-1.1-1.7-2 .5-.6-2-1.9-.7.8-1.9-.8-1.9 1.9-.7.6-2 2 .5z" fill="none" stroke="#5a95a8" stroke-width="1" stroke-linejoin="round"/></svg>
<div class="t" style="top:1009px;font-size:12.6px;letter-spacing:-0.285px;left:36.00px;color:#5a95a8;-webkit-text-stroke:.3px #5a95a8;">Manage Views</div>
<svg class="a" style="left:186px;top:1009px;" width="15" height="15" viewBox="0 0 15 15"><circle cx="5.4" cy="4.2" r="2.9" fill="none" stroke="#5a95a8" stroke-width="1"/><path d="M.8 9.3h9.2v1.2c0 2.2-2 3.3-4.6 3.3S.8 12.700 .8 10.500z" fill="none" stroke="#5a95a8" stroke-width="1"/><path d="M10.5 2.2c.9.9.9 2.700 0 3.600M12.300 .800c1.700 1.800 1.700 4.700 0 6.500" fill="none" stroke="#5a95a8" stroke-width="1"/></svg>
<div class="t" style="top:1009px;font-size:12.6px;letter-spacing:-0.309px;left:205.00px;color:#5a95a8;-webkit-text-stroke:.3px #5a95a8;">Suggest a View</div>
<svg width="0" height="0" style="position:absolute"><defs><linearGradient id="gx" x1="0" y1="0" x2="1" y2="1"><stop offset="0" stop-color="#fff"/><stop offset="1" stop-color="#bfcce6"/></linearGradient></defs></svg>
<div class="a" style="left:322px;top:188px;width:1536px;height:832px;background:#fff;"></div>
<div class="t" style="top:196px;font-size:12.47px;letter-spacing:-0.179px;left:324.00px;color:#111;">System</div>
<div class="t" style="top:196px;font-size:12.8px;letter-spacing:0.049px;left:792.00px;color:#111;">On-Premises fields</div>
<div class="a" style="left:322px;top:219px;width:1536px;height:1px;background:#c4c4c4;"></div>
<div class="a" style="left:322px;top:252px;width:1536px;height:1px;background:#b4b4b4;"></div>
<div class="a" style="left:360px;top:223px;width:1px;height:27px;background:#bdbdbd;"></div>
<div class="a" style="left:380px;top:223px;width:1px;height:27px;background:#bdbdbd;"></div>
<div class="a" style="left:405px;top:223px;width:1px;height:27px;background:#bdbdbd;"></div>
<div class="a" style="left:476px;top:223px;width:1px;height:27px;background:#bdbdbd;"></div>
<div class="a" style="left:789px;top:223px;width:1px;height:27px;background:#bdbdbd;"></div>
<div class="a" style="left:823px;top:223px;width:1px;height:27px;background:#bdbdbd;"></div>
<div class="a" style="left:999px;top:223px;width:1px;height:27px;background:#bdbdbd;"></div>
<div class="a" style="left:1175px;top:223px;width:1px;height:27px;background:#bdbdbd;"></div>
<div class="a" style="left:1351px;top:223px;width:1px;height:27px;background:#bdbdbd;"></div>
<div class="a" style="left:1527px;top:223px;width:1px;height:27px;background:#bdbdbd;"></div>
<div class="a" style="left:1703px;top:223px;width:1px;height:27px;background:#bdbdbd;"></div>
<div class="a" style="left:653px;top:218px;width:137px;height:2px;background:#0078d7;"></div>
<div class="a" style="left:653px;top:220px;width:116px;height:32px;background:#0078d7;"></div>
<div class="t" style="top:229px;font-size:12.8px;letter-spacing:-0.131px;left:656.00px;color:#fff;">Username</div>
<svg class="a" style="left:326px;top:229.5px;" width="10" height="12" viewBox="0 0 10 12"><path d="M2.500 5.500V3.700a2.500 2.500 0 0 1 5 0V5.500" fill="none" stroke="#e9b05c" stroke-width="1.800"/><rect x="0.400" y="4.900" width="9.200" height="6.100" rx=".6" fill="#e9b05c"/><path d="M4.200 6.800h1.600l-.8 2.200z" fill="#fff" opacity=".85"/></svg>
<svg class="a" style="left:365.5px;top:229.5px;" width="10" height="12" viewBox="0 0 10 12"><path d="M2.500 5.500V3.700a2.500 2.500 0 0 1 5 0V5.500" fill="none" stroke="#e9b05c" stroke-width="1.800"/><rect x="0.400" y="4.900" width="9.200" height="6.100" rx=".6" fill="#e9b05c"/><path d="M4.200 6.800h1.600l-.8 2.200z" fill="#fff" opacity=".85"/></svg>
<svg class="a" style="left:385.5px;top:229.5px;" width="10" height="12" viewBox="0 0 10 12"><path d="M2.500 5.500V3.700a2.500 2.500 0 0 1 5 0V5.500" fill="none" stroke="#e9b05c" stroke-width="1.800"/><rect x="0.400" y="4.900" width="9.200" height="6.100" rx=".6" fill="#e9b05c"/><path d="M4.200 6.800h1.600l-.8 2.200z" fill="#fff" opacity=".85"/></svg>
<svg class="a" style="left:410.5px;top:229.5px;" width="10" height="12" viewBox="0 0 10 12"><path d="M2.500 5.500V3.700a2.500 2.500 0 0 1 5 0V5.500" fill="none" stroke="#e9b05c" stroke-width="1.800"/><rect x="0.400" y="4.900" width="9.200" height="6.100" rx=".6" fill="#e9b05c"/><path d="M4.200 6.800h1.600l-.8 2.200z" fill="#fff" opacity=".85"/></svg>
<div class="t" style="top:229px;font-size:12.8px;letter-spacing:0.141px;left:342.00px;color:#111;">M.</div>
<div class="t" style="top:229px;font-size:12.8px;left:400.50px;color:#111;width:3px;overflow:hidden;">:</div>
<div class="t" style="top:229px;font-size:12.8px;letter-spacing:-0.138px;left:426.00px;color:#111;">On-Pr...</div>
<div class="t" style="top:229px;font-size:12.8px;letter-spacing:0.069px;left:479.00px;color:#111;">Display Name</div>
<svg class="a" style="left:639.5px;top:232.5px;" width="10" height="6" viewBox="0 0 10 6"><path d="M0 6L5 0.3 10 6z" fill="#c2c2c2"/></svg>
<div class="t" style="top:229px;font-size:11.31px;letter-spacing:-0.493px;left:772.00px;color:#111;">S...</div>
<div class="t" style="top:229px;font-size:12.8px;letter-spacing:-0.027px;left:791.50px;color:#111;">led</div>
<div class="t" style="top:229px;font-size:13.17px;letter-spacing:0.217px;left:826.30px;color:#111;">Manager</div>
<div class="t" style="top:229px;font-size:12.8px;letter-spacing:0.104px;left:1002.40px;color:#111;">Manager (Friendly)</div>
<div class="t" style="top:229px;font-size:12.8px;letter-spacing:0.055px;left:1178.30px;color:#111;">Sam Account Name</div>
<div class="t" style="top:229px;font-size:12.8px;letter-spacing:0.059px;left:1354.30px;color:#111;">User Principal Name</div>
<div class="t" style="top:229px;font-size:12.8px;letter-spacing:0.212px;left:1530.30px;color:#111;">Department</div>
<div class="t" style="top:229px;font-size:12.8px;letter-spacing:0.059px;left:1706.30px;color:#111;">Title</div>
<svg class="a" style="left:327px;top:261px;" width="11" height="11" viewBox="0 0 11 11"><rect x="0.5" y="0.5" width="10" height="10" rx="1.500" fill="url(#gx)" stroke="#8792b0"/><path d="M2.800 5.500h5.400" stroke="#222" stroke-width="1.100"/><path d="M5.500 2.800v5.400" stroke="#222" stroke-width="1.100"/></svg>
<svg class="a" style="left:344px;top:262px;" width="14.5" height="10" viewBox="0 0 14.5 10"><path d="M6.500 6.500a2.600 2.600 0 0 1 1.200-4.800 3 3 0 0 1 5.300 1.300 2.400 2.400 0 0 1-.6 4.700z" fill="#336fb3"/><path d="M2.700 9.900a2.600 2.600 0 0 1-.3-5.100 3.600 3.600 0 0 1 6.700-1 2.900 2.900 0 0 1 2.700 3.100 2.900 2.900 0 0 1-2.600 3z" fill="#336fb3" stroke="#9fc0e6" stroke-width=".5"/></svg>
<div class="t" style="top:260px;font-size:12.8px;letter-spacing:0.158px;left:364.30px;color:#000;font-weight:bold;">In cloud (211)</div>
<svg class="a" style="left:327px;top:289px;" width="11" height="11" viewBox="0 0 11 11"><rect x="0.5" y="0.5" width="10" height="10" rx="1.500" fill="url(#gx)" stroke="#8792b0"/><path d="M2.800 5.500h5.400" stroke="#222" stroke-width="1.100"/><path d="M5.500 2.800v5.400" stroke="#222" stroke-width="1.100"/></svg>
<svg class="a" style="left:345.5px;top:287.5px;" width="11" height="15" viewBox="0 0 11 15"><rect x="0.300" y="0.300" width="10.400" height="14.200" rx="2.200" fill="#555"/><path d="M3.300 10.300h4.400M3.300 12.300h4.400" stroke="#fff" stroke-width="1.100"/></svg>
<div class="t" style="top:288px;font-size:12.8px;letter-spacing:0.089px;left:364.30px;color:#000;font-weight:bold;">On-premises (20)</div>
<svg class="a" style="left:327px;top:317px;" width="11" height="11" viewBox="0 0 11 11"><rect x="0.5" y="0.5" width="10" height="10" rx="1.500" fill="url(#gx)" stroke="#8792b0"/><path d="M2.800 5.500h5.400" stroke="#222" stroke-width="1.100"/></svg>
<svg class="a" style="left:344px;top:316px;" width="14" height="14" viewBox="0 0 16 16"><path d="M5 5.500h9M11 1.800l4.300 3.700L11 9.200" fill="none" stroke="#4a9e79" stroke-width="2.200"/><path d="M11 11H2M5 7.300L.7 11 5 14.700" fill="none" stroke="#4a9e79" stroke-width="2.200"/></svg>
<div class="t" style="top:316px;font-size:12.8px;letter-spacing:-0.081px;left:364.30px;color:#000;font-weight:bold;">Synced (123)</div>
<div class="a" style="left:340px;top:336px;width:1518px;height:1px;background:#efefef;"></div>
<svg class="a" style="left:344px;top:343px;" width="14" height="14" viewBox="0 0 14 14"><circle cx="7" cy="7" r="6" fill="#fff" stroke="#6e6e6e" stroke-width="1.400"/><circle cx="7" cy="7" r="2.900" fill="#9a9a9a"/></svg>
<svg class="a" style="left:364px;top:343.1px;" width="14" height="14" viewBox="0 0 14 14"><path d="M0 13.900v-1.100c0-2 1.500-3.100 3.100-3.100 1.900 1.200 5.800 1.200 7.700 0 1.600 0 3.200 1.100 3.200 3.100v1.100z" fill="#2980b9"/><circle cx="6.950" cy="4.500" r="4.700" fill="#fff"/><circle cx="6.950" cy="4.500" r="4.150" fill="#2980b9"/></svg>
<div class="t" style="top:344px;font-size:12.8px;left:479.00px;color:#111;width:172px;overflow:hidden;">2186Lilly Smith 2</div>
<div class="t" style="top:344px;font-size:12.8px;left:655.50px;color:#111;width:111px;overflow:hidden;">Lilly.smith.copy@ovh.ytria.io</div>
<svg class="a" style="left:770.8px;top:342.0px;" width="16" height="16" viewBox="0 0 16 16"><path d="M6.500 4.900h7.500M10.600 2.100l4 2.800-4 2.800" fill="none" stroke="#4a9e79" stroke-width="2.100" stroke-linejoin="miter"/><path d="M12 11H4M7.800 8.200L3.800 11l4 2.800" fill="none" stroke="#4a9e79" stroke-width="2.100"/></svg>
<div class="a" style="left:790px;top:337px;width:34px;height:27px;background:#f0f0f0;"></div>
<svg class="a" style="left:790px;top:344px;overflow:hidden;" width="10" height="13" viewBox="0 0 10 13"><rect x="-4.5" y="0.5" width="13" height="12" fill="#fdfdfd" stroke="#c4c4c4"/><rect x="-2.5" y="2.5" width="9" height="8" fill="none" stroke="#e9e9e9"/></svg>
<div class="a" style="left:824px;top:337px;width:175px;height:27px;background:#d6d6d6;"></div>
<div class="a" style="left:1000px;top:337px;width:175px;height:27px;background:#d6d6d6;"></div>
<div class="t" style="top:344px;font-size:12.8px;left:1178.30px;color:#111;width:170.7px;overflow:hidden;">Copy Lilly Smith</div>
<div class="t" style="top:344px;font-size:12.8px;left:1354.30px;color:#111;width:170.7px;overflow:hidden;">Lilly.smith.copy@ovh.ytria.io</div>
<div class="t" style="top:344px;font-size:12.8px;left:1530.30px;color:#111;width:170.7px;overflow:hidden;">Sales</div>
<div class="a" style="left:1704px;top:337px;width:154px;height:27px;background:#d6d6d6;"></div>
<div class="a" style="left:340px;top:364px;width:1518px;height:1px;background:#efefef;"></div>
<svg class="a" style="left:344px;top:371px;" width="14" height="14" viewBox="0 0 14 14"><circle cx="7" cy="7" r="6" fill="#fff" stroke="#6e6e6e" stroke-width="1.400"/><circle cx="7" cy="7" r="2.900" fill="#9a9a9a"/></svg>
<svg class="a" style="left:364px;top:371.1px;" width="14" height="14" viewBox="0 0 14 14"><path d="M0 13.900v-1.100c0-2 1.500-3.100 3.100-3.100 1.900 1.200 5.800 1.200 7.700 0 1.600 0 3.200 1.100 3.200 3.100v1.100z" fill="#2980b9"/><circle cx="6.950" cy="4.500" r="4.700" fill="#fff"/><circle cx="6.950" cy="4.500" r="4.150" fill="#2980b9"/></svg>
<div class="t" style="top:372px;font-size:12.8px;left:479.00px;color:#111;width:172px;overflow:hidden;">Aarav Melton</div>
<div class="t" style="top:372px;font-size:12.8px;left:655.50px;color:#111;width:111px;overflow:hidden;">Aarav.Melton@sygx2.onmicrosoft.com</div>
<svg class="a" style="left:770.8px;top:370.0px;" width="16" height="16" viewBox="0 0 16 16"><path d="M6.500 4.900h7.500M10.600 2.100l4 2.800-4 2.800" fill="none" stroke="#4a9e79" stroke-width="2.100" stroke-linejoin="miter"/><path d="M12 11H4M7.800 8.200L3.800 11l4 2.800" fill="none" stroke="#4a9e79" stroke-width="2.100"/></svg>
<div class="a" style="left:790px;top:365px;width:34px;height:27px;background:#f0f0f0;"></div>
<svg class="a" style="left:790px;top:372px;overflow:hidden;" width="10" height="13" viewBox="0 0 10 13"><rect x="-4.5" y="0.5" width="13" height="12" fill="#fdfdfd" stroke="#c4c4c4"/><rect x="-2.5" y="2.5" width="9" height="8" fill="none" stroke="#e9e9e9"/></svg>
<div class="t" style="top:372px;font-size:12.8px;left:826.30px;color:#111;width:170.7px;overflow:hidden;">CN=Alfred Welcome,OU=Accounts,DC=ytria,DC=local</div>
<div class="t" style="top:372px;font-size:12.8px;left:1002.30px;color:#111;width:170.7px;overflow:hidden;">Alfred Welcome</div>
<div class="t" style="top:372px;font-size:12.8px;left:1178.30px;color:#111;width:170.7px;overflow:hidden;">Aarav Melton</div>
<div class="t" style="top:372px;font-size:12.8px;left:1354.30px;color:#111;width:170.7px;overflow:hidden;">Aarav.Melton@old_domain.onmicrosoft.com</div>
<div class="t" style="top:372px;font-size:12.8px;left:1530.30px;color:#111;width:170.7px;overflow:hidden;">Marketing</div>
<div class="t" style="top:372px;font-size:12.8px;left:1706.30px;color:#111;width:149.7px;overflow:hidden;">Senior product manager</div>
<div class="a" style="left:340px;top:392px;width:1518px;height:1px;background:#efefef;"></div>
<svg class="a" style="left:344px;top:399px;" width="14" height="14" viewBox="0 0 14 14"><circle cx="7" cy="7" r="6" fill="#fff" stroke="#6e6e6e" stroke-width="1.400"/><circle cx="7" cy="7" r="2.900" fill="#9a9a9a"/></svg>
<svg class="a" style="left:364px;top:399.1px;" width="14" height="14" viewBox="0 0 14 14"><path d="M0 13.900v-1.100c0-2 1.500-3.100 3.100-3.100 1.900 1.200 5.800 1.200 7.700 0 1.600 0 3.200 1.100 3.200 3.100v1.100z" fill="#2980b9"/><circle cx="6.950" cy="4.500" r="4.700" fill="#fff"/><circle cx="6.950" cy="4.500" r="4.150" fill="#2980b9"/></svg>
<div class="t" style="top:400px;font-size:12.8px;left:479.00px;color:#111;width:172px;overflow:hidden;">Abbey.Coleman</div>
<div class="t" style="top:400px;font-size:12.8px;left:655.50px;color:#111;width:111px;overflow:hidden;">Abbey.Coleman@ovh.ytria.io</div>
<svg class="a" style="left:770.8px;top:398.0px;" width="16" height="16" viewBox="0 0 16 16"><path d="M6.500 4.900h7.500M10.600 2.100l4 2.800-4 2.800" fill="none" stroke="#4a9e79" stroke-width="2.100" stroke-linejoin="miter"/><path d="M12 11H4M7.800 8.200L3.800 11l4 2.800" fill="none" stroke="#4a9e79" stroke-width="2.100"/></svg>
<div class="a" style="left:790px;top:393px;width:34px;height:27px;background:#f0f0f0;"></div>
<svg class="a" style="left:790px;top:400px;overflow:hidden;" width="10" height="13" viewBox="0 0 10 13"><rect x="-4.5" y="0.5" width="13" height="12" fill="#fdfdfd" stroke="#c4c4c4"/><rect x="-2.5" y="2.5" width="9" height="8" fill="none" stroke="#e9e9e9"/></svg>
<div class="a" style="left:824px;top:393px;width:175px;height:27px;background:#d6d6d6;"></div>
<div class="a" style="left:1000px;top:393px;width:175px;height:27px;background:#d6d6d6;"></div>
<div class="t" style="top:400px;font-size:12.8px;left:1178.30px;color:#111;width:170.7px;overflow:hidden;">Abbey.Coleman</div>
<div class="t" style="top:400px;font-size:12.8px;left:1354.30px;color:#111;width:170.7px;overflow:hidden;">Abbey.Coleman@ovh.ytria.io</div>
<div class="t" style="top:400px;font-size:12.8px;left:1530.30px;color:#111;width:170.7px;overflow:hidden;">Sales</div>
<div class="a" style="left:1704px;top:393px;width:154px;height:27px;background:#d6d6d6;"></div>
<div class="a" style="left:340px;top:420px;width:1518px;height:1px;background:#efefef;"></div>
<svg class="a" style="left:344px;top:427px;" width="14" height="14" viewBox="0 0 14 14"><circle cx="7" cy="7" r="6" fill="#fff" stroke="#6e6e6e" stroke-width="1.400"/><circle cx="7" cy="7" r="2.900" fill="#9a9a9a"/></svg>
<svg class="a" style="left:364px;top:427.1px;" width="14" height="14" viewBox="0 0 14 14"><path d="M0 13.900v-1.100c0-2 1.500-3.100 3.100-3.100 1.900 1.200 5.800 1.200 7.700 0 1.600 0 3.200 1.100 3.200 3.100v1.100z" fill="#2980b9"/><circle cx="6.950" cy="4.500" r="4.700" fill="#fff"/><circle cx="6.950" cy="4.500" r="4.150" fill="#2980b9"/></svg>
<div class="a" style="left:406px;top:421px;width:70px;height:27px;background:#dafbda;"></div>
<svg class="a" style="left:408px;top:426px;" width="16" height="16" viewBox="0 0 16 16"><rect width="16" height="16" fill="#fff"/><path d="M0.600 15.400L1.800 11.300 12.300 .8a1.200 1.200 0 0 1 1.700 0l1.200 1.200a1.200 1.200 0 0 1 0 1.700L4.700 14.200z" fill="#727272"/><path d="M11.200 1.900l2.900 2.900M2.600 10.500l2.900 2.900" stroke="#fff" stroke-width=".8"/></svg>
<div class="t" style="top:428px;font-size:12.8px;letter-spacing:0.034px;left:426.30px;color:#111;">Edited</div>
<div class="t" style="top:428px;font-size:12.8px;left:479.00px;color:#111;width:172px;overflow:hidden;">Aden Wade</div>
<div class="t" style="top:428px;font-size:12.8px;left:655.50px;color:#111;width:111px;overflow:hidden;">Aden.Wade@sygx2.onmicrosoft.com</div>
<svg class="a" style="left:770.8px;top:426.0px;" width="16" height="16" viewBox="0 0 16 16"><path d="M6.500 4.900h7.500M10.600 2.100l4 2.800-4 2.800" fill="none" stroke="#4a9e79" stroke-width="2.100" stroke-linejoin="miter"/><path d="M12 11H4M7.800 8.200L3.800 11l4 2.800" fill="none" stroke="#4a9e79" stroke-width="2.100"/></svg>
<div class="a" style="left:790px;top:421px;width:34px;height:27px;background:#f0f0f0;"></div>
<svg class="a" style="left:790px;top:428px;overflow:hidden;" width="10" height="13" viewBox="0 0 10 13"><rect x="-4.5" y="0.5" width="13" height="12" fill="#fdfdfd" stroke="#c4c4c4"/><rect x="-2.5" y="2.5" width="9" height="8" fill="none" stroke="#e9e9e9"/></svg>
<div class="a" style="left:824px;top:421px;width:175px;height:27px;background:#dafbda;"></div>
<div class="t" style="top:428px;font-size:12.8px;left:826.30px;color:#111;width:170.7px;overflow:hidden;">CN=Kaylyn Maxwell,OU=Accounts,DC=ytria,DC=local</div>
<div class="a" style="left:1000px;top:421px;width:175px;height:27px;background:#dafbda;"></div>
<div class="t" style="top:428px;font-size:12.8px;left:1002.30px;color:#111;width:170.7px;overflow:hidden;">Kaylyn Maxwell</div>
<div class="t" style="top:428px;font-size:12.8px;left:1178.30px;color:#111;width:170.7px;overflow:hidden;">Aden Wade</div>
<div class="t" style="top:428px;font-size:12.8px;left:1354.30px;color:#111;width:170.7px;overflow:hidden;">Aden.Wade@sygx2.onmicrosoft.com</div>
<div class="a" style="left:1528px;top:421px;width:175px;height:27px;background:#dafbda;"></div>
<div class="t" style="top:428px;font-size:12.8px;left:1530.30px;color:#111;width:170.7px;overflow:hidden;">Consulting</div>
<div class="a" style="left:1704px;top:421px;width:154px;height:27px;background:#dafbda;"></div>
<div class="t" style="top:428px;font-size:12.8px;left:1706.30px;color:#111;width:149.7px;overflow:hidden;">External consultant</div>
<div class="a" style="left:340px;top:448px;width:1518px;height:1px;background:#efefef;"></div>
<svg class="a" style="left:344px;top:455px;" width="14" height="14" viewBox="0 0 14 14"><circle cx="7" cy="7" r="6" fill="#fff" stroke="#6e6e6e" stroke-width="1.400"/><circle cx="7" cy="7" r="2.900" fill="#9a9a9a"/></svg>
<svg class="a" style="left:364px;top:455.1px;" width="14" height="14" viewBox="0 0 14 14"><path d="M0 13.900v-1.100c0-2 1.500-3.100 3.100-3.100 1.900 1.200 5.800 1.200 7.700 0 1.600 0 3.200 1.100 3.200 3.100v1.100z" fill="#2980b9"/><circle cx="6.950" cy="4.500" r="4.700" fill="#fff"/><circle cx="6.950" cy="4.500" r="4.150" fill="#2980b9"/></svg>
<div class="a" style="left:406px;top:449px;width:70px;height:27px;background:#dafbda;"></div>
<svg class="a" style="left:408px;top:454px;" width="16" height="16" viewBox="0 0 16 16"><rect width="16" height="16" fill="#fff"/><path d="M0.600 15.400L1.800 11.300 12.300 .8a1.200 1.200 0 0 1 1.700 0l1.200 1.200a1.200 1.200 0 0 1 0 1.700L4.700 14.200z" fill="#727272"/><path d="M11.200 1.900l2.900 2.900M2.600 10.500l2.900 2.900" stroke="#fff" stroke-width=".8"/></svg>
<div class="t" style="top:456px;font-size:12.8px;letter-spacing:0.034px;left:426.30px;color:#111;">Edited</div>
<div class="t" style="top:456px;font-size:12.8px;left:479.00px;color:#111;width:172px;overflow:hidden;">Adriana Morris</div>
<div class="t" style="top:456px;font-size:12.8px;left:655.50px;color:#111;width:111px;overflow:hidden;">Adriana.Morris@sygx2.onmicrosoft.com</div>
<svg class="a" style="left:770.8px;top:454.0px;" width="16" height="16" viewBox="0 0 16 16"><path d="M6.500 4.900h7.500M10.600 2.100l4 2.800-4 2.800" fill="none" stroke="#4a9e79" stroke-width="2.100" stroke-linejoin="miter"/><path d="M12 11H4M7.800 8.200L3.800 11l4 2.800" fill="none" stroke="#4a9e79" stroke-width="2.100"/></svg>
<div class="a" style="left:790px;top:449px;width:34px;height:27px;background:#f0f0f0;"></div>
<svg class="a" style="left:790px;top:456px;overflow:hidden;" width="10" height="13" viewBox="0 0 10 13"><rect x="-4.5" y="0.5" width="13" height="12" fill="#fdfdfd" stroke="#c4c4c4"/><rect x="-2.5" y="2.5" width="9" height="8" fill="none" stroke="#e9e9e9"/></svg>
<div class="a" style="left:824px;top:449px;width:175px;height:27px;background:#dafbda;"></div>
<div class="t" style="top:456px;font-size:12.8px;left:826.30px;color:#111;width:170.7px;overflow:hidden;">CN=Kaylyn Maxwell,OU=Accounts,DC=ytria,DC=local</div>
<div class="a" style="left:1000px;top:449px;width:175px;height:27px;background:#dafbda;"></div>
<div class="t" style="top:456px;font-size:12.8px;left:1002.30px;color:#111;width:170.7px;overflow:hidden;">Kaylyn Maxwell</div>
<div class="t" style="top:456px;font-size:12.8px;left:1178.30px;color:#111;width:170.7px;overflow:hidden;">Adriana Morris</div>
<div class="t" style="top:456px;font-size:12.8px;left:1354.30px;color:#111;width:170.7px;overflow:hidden;">Adriana.Morris@sygx2.onmicrosoft.com</div>
<div class="a" style="left:1528px;top:449px;width:175px;height:27px;background:#dafbda;"></div>
<div class="t" style="top:456px;font-size:12.8px;left:1530.30px;color:#111;width:170.7px;overflow:hidden;">Consulting</div>
<div class="a" style="left:1704px;top:449px;width:154px;height:27px;background:#dafbda;"></div>
<div class="t" style="top:456px;font-size:12.8px;left:1706.30px;color:#111;width:149.7px;overflow:hidden;">External consultant</div>
<div class="a" style="left:340px;top:476px;width:1518px;height:1px;background:#efefef;"></div>
<svg class="a" style="left:344px;top:483px;" width="14" height="14" viewBox="0 0 14 14"><circle cx="7" cy="7" r="6" fill="#fff" stroke="#6e6e6e" stroke-width="1.400"/><circle cx="7" cy="7" r="2.900" fill="#9a9a9a"/></svg>
<svg class="a" style="left:364px;top:483.1px;" width="14" height="14" viewBox="0 0 14 14"><path d="M0 13.900v-1.100c0-2 1.500-3.100 3.100-3.100 1.900 1.200 5.800 1.200 7.700 0 1.600 0 3.200 1.100 3.200 3.100v1.100z" fill="#2980b9"/><circle cx="6.950" cy="4.500" r="4.700" fill="#fff"/><circle cx="6.950" cy="4.500" r="4.150" fill="#2980b9"/></svg>
<div class="a" style="left:406px;top:477px;width:70px;height:27px;background:#dafbda;"></div>
<svg class="a" style="left:408px;top:482px;" width="16" height="16" viewBox="0 0 16 16"><rect width="16" height="16" fill="#fff"/><path d="M0.600 15.400L1.800 11.300 12.300 .8a1.200 1.200 0 0 1 1.700 0l1.200 1.200a1.200 1.200 0 0 1 0 1.700L4.700 14.200z" fill="#727272"/><path d="M11.200 1.900l2.900 2.900M2.600 10.500l2.900 2.900" stroke="#fff" stroke-width=".8"/></svg>
<div class="t" style="top:484px;font-size:12.8px;letter-spacing:0.034px;left:426.30px;color:#111;">Edited</div>
<div class="t" style="top:484px;font-size:12.8px;left:479.00px;color:#111;width:172px;overflow:hidden;">Adrienne Gonzalez</div>
<div class="t" style="top:484px;font-size:12.8px;left:655.50px;color:#111;width:111px;overflow:hidden;">Adrienne.Gonzalez@sygx2.onmicrosoft.com</div>
<svg class="a" style="left:770.8px;top:482.0px;" width="16" height="16" viewBox="0 0 16 16"><path d="M6.500 4.900h7.500M10.600 2.100l4 2.800-4 2.800" fill="none" stroke="#4a9e79" stroke-width="2.100" stroke-linejoin="miter"/><path d="M12 11H4M7.800 8.200L3.800 11l4 2.800" fill="none" stroke="#4a9e79" stroke-width="2.100"/></svg>
<div class="a" style="left:790px;top:477px;width:34px;height:27px;background:#f0f0f0;"></div>
<svg class="a" style="left:790px;top:484px;overflow:hidden;" width="10" height="13" viewBox="0 0 10 13"><rect x="-4.5" y="0.5" width="13" height="12" fill="#fdfdfd" stroke="#c4c4c4"/><rect x="-2.5" y="2.5" width="9" height="8" fill="none" stroke="#e9e9e9"/><path d="M-1 6.800l2.600 2.800L6.800 2.600" fill="none" stroke="#b9b9b9" stroke-width="1.700"/></svg>
<div class="a" style="left:824px;top:477px;width:175px;height:27px;background:#dafbda;"></div>
<div class="t" style="top:484px;font-size:12.8px;left:826.30px;color:#111;width:170.7px;overflow:hidden;">CN=Kaylyn Maxwell,OU=Accounts,DC=ytria,DC=local</div>
<div class="a" style="left:1000px;top:477px;width:175px;height:27px;background:#dafbda;"></div>
<div class="t" style="top:484px;font-size:12.8px;left:1002.30px;color:#111;width:170.7px;overflow:hidden;">Kaylyn Maxwell</div>
<div class="t" style="top:484px;font-size:12.8px;left:1178.30px;color:#111;width:170.7px;overflow:hidden;">Adrienne Gonzalez</div>
<div class="t" style="top:484px;font-size:12.8px;left:1354.30px;color:#111;width:170.7px;overflow:hidden;">Adrienne.Gonzalez@sygx2.onmicrosoft.com</div>
<div class="a" style="left:1528px;top:477px;width:175px;height:27px;background:#dafbda;"></div>
<div class="t" style="top:484px;font-size:12.8px;left:1530.30px;color:#111;width:170.7px;overflow:hidden;">Consulting</div>
<div class="a" style="left:1704px;top:477px;width:154px;height:27px;background:#dafbda;"></div>
<div class="t" style="top:484px;font-size:12.8px;left:1706.30px;color:#111;width:149.7px;overflow:hidden;">External consultant</div>
<div class="a" style="left:340px;top:504px;width:1518px;height:1px;background:#efefef;"></div>
<svg class="a" style="left:344px;top:511px;" width="14" height="14" viewBox="0 0 14 14"><circle cx="7" cy="7" r="6" fill="#fff" stroke="#6e6e6e" stroke-width="1.400"/><circle cx="7" cy="7" r="2.900" fill="#9a9a9a"/></svg>
<svg class="a" style="left:364px;top:511.1px;" width="14" height="14" viewBox="0 0 14 14"><path d="M0 13.900v-1.100c0-2 1.500-3.100 3.100-3.100 1.900 1.200 5.800 1.200 7.700 0 1.600 0 3.200 1.100 3.200 3.100v1.100z" fill="#2980b9"/><circle cx="6.950" cy="4.500" r="4.700" fill="#fff"/><circle cx="6.950" cy="4.500" r="4.150" fill="#2980b9"/></svg>
<div class="a" style="left:406px;top:505px;width:70px;height:27px;background:#dafbda;"></div>
<svg class="a" style="left:408px;top:510px;" width="16" height="16" viewBox="0 0 16 16"><rect width="16" height="16" fill="#fff"/><path d="M0.600 15.400L1.800 11.300 12.300 .8a1.200 1.200 0 0 1 1.700 0l1.200 1.200a1.200 1.200 0 0 1 0 1.700L4.700 14.200z" fill="#727272"/><path d="M11.200 1.900l2.900 2.900M2.600 10.500l2.900 2.900" stroke="#fff" stroke-width=".8"/></svg>
<div class="t" style="top:512px;font-size:12.8px;letter-spacing:0.034px;left:426.30px;color:#111;">Edited</div>
<div class="t" style="top:512px;font-size:12.8px;left:479.00px;color:#111;width:172px;overflow:hidden;">Ahmed Liu</div>
<div class="t" style="top:512px;font-size:12.8px;left:655.50px;color:#111;width:111px;overflow:hidden;">Ahmed.Liu@sygx2.onmicrosoft.com</div>
<svg class="a" style="left:770.8px;top:510.0px;" width="16" height="16" viewBox="0 0 16 16"><path d="M6.500 4.900h7.500M10.600 2.100l4 2.800-4 2.800" fill="none" stroke="#4a9e79" stroke-width="2.100" stroke-linejoin="miter"/><path d="M12 11H4M7.800 8.200L3.800 11l4 2.800" fill="none" stroke="#4a9e79" stroke-width="2.100"/></svg>
<div class="a" style="left:790px;top:505px;width:34px;height:27px;background:#f0f0f0;"></div>
<svg class="a" style="left:790px;top:512px;overflow:hidden;" width="10" height="13" viewBox="0 0 10 13"><rect x="-4.5" y="0.5" width="13" height="12" fill="#fdfdfd" stroke="#c4c4c4"/><rect x="-2.5" y="2.5" width="9" height="8" fill="none" stroke="#e9e9e9"/><path d="M-1 6.800l2.600 2.800L6.800 2.600" fill="none" stroke="#b9b9b9" stroke-width="1.700"/></svg>
<div class="a" style="left:824px;top:505px;width:175px;height:27px;background:#dafbda;"></div>
<div class="t" style="top:512px;font-size:12.8px;left:826.30px;color:#111;width:170.7px;overflow:hidden;">CN=Kaylyn Maxwell,OU=Accounts,DC=ytria,DC=local</div>
<div class="a" style="left:1000px;top:505px;width:175px;height:27px;background:#dafbda;"></div>
<div class="t" style="top:512px;font-size:12.8px;left:1002.30px;color:#111;width:170.7px;overflow:hidden;">Kaylyn Maxwell</div>
<div class="t" style="top:512px;font-size:12.8px;left:1178.30px;color:#111;width:170.7px;overflow:hidden;">Ahmed Liu</div>
<div class="t" style="top:512px;font-size:12.8px;left:1354.30px;color:#111;width:170.7px;overflow:hidden;">Ahmed.Liu@old_domain.onmicrosoft.com</div>
<div class="a" style="left:1528px;top:505px;width:175px;height:27px;background:#dafbda;"></div>
<div class="t" style="top:512px;font-size:12.8px;left:1530.30px;color:#111;width:170.7px;overflow:hidden;">Consulting</div>
<div class="a" style="left:1704px;top:505px;width:154px;height:27px;background:#dafbda;"></div>
<div class="t" style="top:512px;font-size:12.8px;left:1706.30px;color:#111;width:149.7px;overflow:hidden;">External consultant</div>
<div class="a" style="left:340px;top:532px;width:1518px;height:1px;background:#efefef;"></div>
<svg class="a" style="left:344px;top:539px;" width="14" height="14" viewBox="0 0 14 14"><circle cx="7" cy="7" r="6" fill="#fff" stroke="#6e6e6e" stroke-width="1.400"/><circle cx="7" cy="7" r="2.900" fill="#9a9a9a"/></svg>
<svg class="a" style="left:364px;top:539.1px;" width="14" height="14" viewBox="0 0 14 14"><path d="M0 13.900v-1.100c0-2 1.500-3.100 3.100-3.100 1.900 1.200 5.800 1.200 7.700 0 1.600 0 3.200 1.100 3.200 3.100v1.100z" fill="#2980b9"/><circle cx="6.950" cy="4.500" r="4.700" fill="#fff"/><circle cx="6.950" cy="4.500" r="4.150" fill="#2980b9"/></svg>
<div class="a" style="left:406px;top:533px;width:70px;height:27px;background:#dafbda;"></div>
<svg class="a" style="left:408px;top:538px;" width="16" height="16" viewBox="0 0 16 16"><rect width="16" height="16" fill="#fff"/><path d="M0.600 15.400L1.800 11.300 12.300 .8a1.200 1.200 0 0 1 1.700 0l1.200 1.200a1.200 1.200 0 0 1 0 1.700L4.700 14.200z" fill="#727272"/><path d="M11.200 1.900l2.900 2.900M2.600 10.500l2.900 2.900" stroke="#fff" stroke-width=".8"/></svg>
<div class="t" style="top:540px;font-size:12.8px;letter-spacing:0.034px;left:426.30px;color:#111;">Edited</div>
<div class="t" style="top:540px;font-size:12.8px;left:479.00px;color:#111;width:172px;overflow:hidden;">Alexus Holland</div>
<div class="t" style="top:540px;font-size:12.8px;left:655.50px;color:#111;width:111px;overflow:hidden;">Alexus.Holland@sygx2.onmicrosoft.com</div>
<svg class="a" style="left:770.8px;top:538.0px;" width="16" height="16" viewBox="0 0 16 16"><path d="M6.500 4.900h7.500M10.600 2.100l4 2.800-4 2.800" fill="none" stroke="#4a9e79" stroke-width="2.100" stroke-linejoin="miter"/><path d="M12 11H4M7.800 8.200L3.800 11l4 2.800" fill="none" stroke="#4a9e79" stroke-width="2.100"/></svg>
<div class="a" style="left:790px;top:533px;width:34px;height:27px;background:#f0f0f0;"></div>
<svg class="a" style="left:790px;top:540px;overflow:hidden;" width="10" height="13" viewBox="0 0 10 13"><rect x="-4.5" y="0.5" width="13" height="12" fill="#fdfdfd" stroke="#c4c4c4"/><rect x="-2.5" y="2.5" width="9" height="8" fill="none" stroke="#e9e9e9"/><path d="M-1 6.800l2.600 2.800L6.800 2.600" fill="none" stroke="#b9b9b9" stroke-width="1.700"/></svg>
<div class="a" style="left:824px;top:533px;width:175px;height:27px;background:#dafbda;"></div>
<div class="t" style="top:540px;font-size:12.8px;left:826.30px;color:#111;width:170.7px;overflow:hidden;">CN=Kaylyn Maxwell,OU=Accounts,DC=ytria,DC=local</div>
<div class="a" style="left:1000px;top:533px;width:175px;height:27px;background:#dafbda;"></div>
<div class="t" style="top:540px;font-size:12.8px;left:1002.30px;color:#111;width:170.7px;overflow:hidden;">Kaylyn Maxwell</div>
<div class="t" style="top:540px;font-size:12.8px;left:1178.30px;color:#111;width:170.7px;overflow:hidden;">Alexus Holland</div>
<div class="t" style="top:540px;font-size:12.8px;left:1354.30px;color:#111;width:170.7px;overflow:hidden;">Alexus.Holland@sygx2.onmicrosoft.com</div>
<div class="a" style="left:1528px;top:533px;width:175px;height:27px;background:#dafbda;"></div>
<div class="t" style="top:540px;font-size:12.8px;left:1530.30px;color:#111;width:170.7px;overflow:hidden;">Consulting</div>
<div class="a" style="left:1704px;top:533px;width:154px;height:27px;background:#dafbda;"></div>
<div class="t" style="top:540px;font-size:12.8px;left:1706.30px;color:#111;width:149.7px;overflow:hidden;">External consultant</div>
<div class="a" style="left:340px;top:560px;width:1518px;height:1px;background:#efefef;"></div>
<svg class="a" style="left:344px;top:567px;" width="14" height="14" viewBox="0 0 14 14"><circle cx="7" cy="7" r="6" fill="#fff" stroke="#6e6e6e" stroke-width="1.400"/><circle cx="7" cy="7" r="2.900" fill="#9a9a9a"/></svg>
<svg class="a" style="left:364px;top:567.1px;" width="14" height="14" viewBox="0 0 14 14"><path d="M0 13.900v-1.100c0-2 1.500-3.100 3.100-3.100 1.900 1.200 5.800 1.200 7.700 0 1.600 0 3.200 1.100 3.200 3.100v1.100z" fill="#2980b9"/><circle cx="6.950" cy="4.500" r="4.700" fill="#fff"/><circle cx="6.950" cy="4.500" r="4.150" fill="#2980b9"/></svg>
<div class="a" style="left:406px;top:561px;width:70px;height:27px;background:#dafbda;"></div>
<svg class="a" style="left:408px;top:566px;" width="16" height="16" viewBox="0 0 16 16"><rect width="16" height="16" fill="#fff"/><path d="M0.600 15.400L1.800 11.300 12.300 .8a1.200 1.200 0 0 1 1.700 0l1.200 1.200a1.200 1.200 0 0 1 0 1.700L4.700 14.200z" fill="#727272"/><path d="M11.200 1.900l2.900 2.900M2.600 10.500l2.900 2.900" stroke="#fff" stroke-width=".8"/></svg>
<div class="t" style="top:568px;font-size:12.8px;letter-spacing:0.034px;left:426.30px;color:#111;">Edited</div>
<div class="t" style="top:568px;font-size:12.8px;left:479.00px;color:#111;width:172px;overflow:hidden;">Alfred Welcome</div>
<div class="t" style="top:568px;font-size:12.8px;left:655.50px;color:#111;width:111px;overflow:hidden;">alfred.welcome@sygx2.onmicrosoft.com</div>
<svg class="a" style="left:770.8px;top:566.0px;" width="16" height="16" viewBox="0 0 16 16"><path d="M6.500 4.900h7.500M10.600 2.100l4 2.800-4 2.800" fill="none" stroke="#4a9e79" stroke-width="2.100" stroke-linejoin="miter"/><path d="M12 11H4M7.800 8.200L3.800 11l4 2.800" fill="none" stroke="#4a9e79" stroke-width="2.100"/></svg>
<div class="a" style="left:790px;top:561px;width:34px;height:27px;background:#f0f0f0;"></div>
<svg class="a" style="left:790px;top:568px;overflow:hidden;" width="10" height="13" viewBox="0 0 10 13"><rect x="-4.5" y="0.5" width="13" height="12" fill="#fdfdfd" stroke="#c4c4c4"/><rect x="-2.5" y="2.5" width="9" height="8" fill="none" stroke="#e9e9e9"/><path d="M-1 6.800l2.600 2.800L6.800 2.600" fill="none" stroke="#b9b9b9" stroke-width="1.700"/></svg>
<div class="a" style="left:824px;top:561px;width:175px;height:27px;background:#dafbda;"></div>
<div class="t" style="top:568px;font-size:12.8px;left:826.30px;color:#111;width:170.7px;overflow:hidden;">CN=Kaylyn Maxwell,OU=Accounts,DC=ytria,DC=local</div>
<div class="a" style="left:1000px;top:561px;width:175px;height:27px;background:#dafbda;"></div>
<div class="t" style="top:568px;font-size:12.8px;left:1002.30px;color:#111;width:170.7px;overflow:hidden;">Kaylyn Maxwell</div>
<div class="t" style="top:568px;font-size:12.8px;left:1178.30px;color:#111;width:170.7px;overflow:hidden;">alfred.welcome</div>
<div class="t" style="top:568px;font-size:12.8px;left:1354.30px;color:#111;width:170.7px;overflow:hidden;">alfred.welcome@sygx2.onmicrosoft.com</div>
<div class="a" style="left:1528px;top:561px;width:175px;height:27px;background:#dafbda;"></div>
<div class="t" style="top:568px;font-size:12.8px;left:1530.30px;color:#111;width:170.7px;overflow:hidden;">Consulting</div>
<div class="a" style="left:1704px;top:561px;width:154px;height:27px;background:#dafbda;"></div>
<div class="t" style="top:568px;font-size:12.8px;left:1706.30px;color:#111;width:149.7px;overflow:hidden;">External consultant</div>
<div class="a" style="left:340px;top:588px;width:1518px;height:1px;background:#efefef;"></div>
<svg class="a" style="left:344px;top:595px;" width="14" height="14" viewBox="0 0 14 14"><circle cx="7" cy="7" r="6" fill="#fff" stroke="#6e6e6e" stroke-width="1.400"/><circle cx="7" cy="7" r="2.900" fill="#9a9a9a"/></svg>
<svg class="a" style="left:364px;top:595.1px;" width="14" height="14" viewBox="0 0 14 14"><path d="M0 13.900v-1.100c0-2 1.500-3.100 3.100-3.100 1.900 1.200 5.800 1.200 7.700 0 1.600 0 3.200 1.100 3.200 3.100v1.100z" fill="#2980b9"/><circle cx="6.950" cy="4.500" r="4.700" fill="#fff"/><circle cx="6.950" cy="4.500" r="4.150" fill="#2980b9"/></svg>
<div class="a" style="left:406px;top:589px;width:70px;height:27px;background:#dafbda;"></div>
<svg class="a" style="left:408px;top:594px;" width="16" height="16" viewBox="0 0 16 16"><rect width="16" height="16" fill="#fff"/><path d="M0.600 15.400L1.800 11.300 12.300 .8a1.200 1.200 0 0 1 1.700 0l1.200 1.200a1.200 1.200 0 0 1 0 1.700L4.700 14.200z" fill="#727272"/><path d="M11.200 1.900l2.900 2.900M2.600 10.500l2.900 2.900" stroke="#fff" stroke-width=".8"/></svg>
<div class="t" style="top:596px;font-size:12.8px;letter-spacing:0.034px;left:426.30px;color:#111;">Edited</div>
<div class="t" style="top:596px;font-size:12.8px;left:479.00px;color:#111;width:172px;overflow:hidden;">Alivia Salinas</div>
<div class="t" style="top:596px;font-size:12.8px;left:655.50px;color:#111;width:111px;overflow:hidden;">Alivia.Salinas@sygx2.onmicrosoft.com</div>
<svg class="a" style="left:770.8px;top:594.0px;" width="16" height="16" viewBox="0 0 16 16"><path d="M6.500 4.900h7.500M10.600 2.100l4 2.800-4 2.800" fill="none" stroke="#4a9e79" stroke-width="2.100" stroke-linejoin="miter"/><path d="M12 11H4M7.800 8.200L3.800 11l4 2.800" fill="none" stroke="#4a9e79" stroke-width="2.100"/></svg>
<div class="a" style="left:790px;top:589px;width:34px;height:27px;background:#f0f0f0;"></div>
<svg class="a" style="left:790px;top:596px;overflow:hidden;" width="10" height="13" viewBox="0 0 10 13"><rect x="-4.5" y="0.5" width="13" height="12" fill="#fdfdfd" stroke="#c4c4c4"/><rect x="-2.5" y="2.5" width="9" height="8" fill="none" stroke="#e9e9e9"/><path d="M-1 6.800l2.600 2.800L6.800 2.600" fill="none" stroke="#b9b9b9" stroke-width="1.700"/></svg>
<div class="a" style="left:824px;top:589px;width:175px;height:27px;background:#dafbda;"></div>
<div class="t" style="top:596px;font-size:12.8px;left:826.30px;color:#111;width:170.7px;overflow:hidden;">CN=Kaylyn Maxwell,OU=Accounts,DC=ytria,DC=local</div>
<div class="a" style="left:1000px;top:589px;width:175px;height:27px;background:#dafbda;"></div>
<div class="t" style="top:596px;font-size:12.8px;left:1002.30px;color:#111;width:170.7px;overflow:hidden;">Kaylyn Maxwell</div>
<div class="t" style="top:596px;font-size:12.8px;left:1178.30px;color:#111;width:170.7px;overflow:hidden;">Alivia Salinas</div>
<div class="t" style="top:596px;font-size:12.8px;left:1354.30px;color:#111;width:170.7px;overflow:hidden;">Alivia.Salinas@old_domain.onmicrosoft.com</div>
<div class="a" style="left:1528px;top:589px;width:175px;height:27px;background:#dafbda;"></div>
<div class="t" style="top:596px;font-size:12.8px;left:1530.30px;color:#111;width:170.7px;overflow:hidden;">Consulting</div>
<div class="a" style="left:1704px;top:589px;width:154px;height:27px;background:#dafbda;"></div>
<div class="t" style="top:596px;font-size:12.8px;left:1706.30px;color:#111;width:149.7px;overflow:hidden;">External consultant</div>
<div class="a" style="left:340px;top:616px;width:1518px;height:1px;background:#efefef;"></div>
<svg class="a" style="left:344px;top:623px;" width="14" height="14" viewBox="0 0 14 14"><circle cx="7" cy="7" r="6" fill="#fff" stroke="#6e6e6e" stroke-width="1.400"/><circle cx="7" cy="7" r="2.900" fill="#9a9a9a"/></svg>
<svg class="a" style="left:364px;top:623.1px;" width="14" height="14" viewBox="0 0 14 14"><path d="M0 13.900v-1.100c0-2 1.500-3.100 3.100-3.100 1.900 1.200 5.800 1.200 7.700 0 1.600 0 3.200 1.100 3.200 3.100v1.100z" fill="#2980b9"/><circle cx="6.950" cy="4.500" r="4.700" fill="#fff"/><circle cx="6.950" cy="4.500" r="4.150" fill="#2980b9"/></svg>
<div class="a" style="left:406px;top:617px;width:70px;height:27px;background:#dafbda;"></div>
<svg class="a" style="left:408px;top:622px;" width="16" height="16" viewBox="0 0 16 16"><rect width="16" height="16" fill="#fff"/><path d="M0.600 15.400L1.800 11.300 12.300 .8a1.200 1.200 0 0 1 1.700 0l1.200 1.200a1.200 1.200 0 0 1 0 1.700L4.700 14.200z" fill="#727272"/><path d="M11.200 1.900l2.900 2.900M2.600 10.500l2.900 2.900" stroke="#fff" stroke-width=".8"/></svg>
<div class="t" style="top:624px;font-size:12.8px;letter-spacing:0.034px;left:426.30px;color:#111;">Edited</div>
<div class="t" style="top:624px;font-size:12.8px;left:479.00px;color:#111;width:172px;overflow:hidden;">Aliza Crane</div>
<div class="t" style="top:624px;font-size:12.8px;left:655.50px;color:#111;width:111px;overflow:hidden;">Aliza.Crane@sygx2.onmicrosoft.com</div>
<svg class="a" style="left:770.8px;top:622.0px;" width="16" height="16" viewBox="0 0 16 16"><path d="M6.500 4.900h7.500M10.600 2.100l4 2.800-4 2.800" fill="none" stroke="#4a9e79" stroke-width="2.100" stroke-linejoin="miter"/><path d="M12 11H4M7.800 8.200L3.800 11l4 2.800" fill="none" stroke="#4a9e79" stroke-width="2.100"/></svg>
<div class="a" style="left:790px;top:617px;width:34px;height:27px;background:#f0f0f0;"></div>
<svg class="a" style="left:790px;top:624px;overflow:hidden;" width="10" height="13" viewBox="0 0 10 13"><rect x="-4.5" y="0.5" width="13" height="12" fill="#fdfdfd" stroke="#c4c4c4"/><rect x="-2.5" y="2.5" width="9" height="8" fill="none" stroke="#e9e9e9"/><path d="M-1 6.800l2.600 2.800L6.800 2.600" fill="none" stroke="#b9b9b9" stroke-width="1.700"/></svg>
<div class="a" style="left:824px;top:617px;width:175px;height:27px;background:#dafbda;"></div>
<div class="t" style="top:624px;font-size:12.8px;left:826.30px;color:#111;width:170.7px;overflow:hidden;">CN=Kaylyn Maxwell,OU=Accounts,DC=ytria,DC=local</div>
<div class="a" style="left:1000px;top:617px;width:175px;height:27px;background:#dafbda;"></div>
<div class="t" style="top:624px;font-size:12.8px;left:1002.30px;color:#111;width:170.7px;overflow:hidden;">Kaylyn Maxwell</div>
<div class="t" style="top:624px;font-size:12.8px;left:1178.30px;color:#111;width:170.7px;overflow:hidden;">Aliza Crane</div>
<div class="t" style="top:624px;font-size:12.8px;left:1354.30px;color:#111;width:170.7px;overflow:hidden;">Aliza.Crane@old_domain.onmicrosoft.com</div>
<div class="a" style="left:1528px;top:617px;width:175px;height:27px;background:#dafbda;"></div>
<div class="t" style="top:624px;font-size:12.8px;left:1530.30px;color:#111;width:170.7px;overflow:hidden;">Consulting</div>
<div class="a" style="left:1704px;top:617px;width:154px;height:27px;background:#dafbda;"></div>
<div class="t" style="top:624px;font-size:12.8px;left:1706.30px;color:#111;width:149.7px;overflow:hidden;">External consultant</div>
<div class="a" style="left:340px;top:644px;width:1518px;height:1px;background:#efefef;"></div>
<svg class="a" style="left:344px;top:651px;" width="14" height="14" viewBox="0 0 14 14"><circle cx="7" cy="7" r="6" fill="#fff" stroke="#6e6e6e" stroke-width="1.400"/><circle cx="7" cy="7" r="2.900" fill="#9a9a9a"/></svg>
<svg class="a" style="left:364px;top:651.1px;" width="14" height="14" viewBox="0 0 14 14"><path d="M0 13.900v-1.100c0-2 1.500-3.100 3.100-3.100 1.900 1.200 5.800 1.200 7.700 0 1.600 0 3.200 1.100 3.200 3.100v1.100z" fill="#2980b9"/><circle cx="6.950" cy="4.500" r="4.700" fill="#fff"/><circle cx="6.950" cy="4.500" r="4.150" fill="#2980b9"/></svg>
<div class="a" style="left:406px;top:645px;width:70px;height:27px;background:#dafbda;"></div>
<svg class="a" style="left:408px;top:650px;" width="16" height="16" viewBox="0 0 16 16"><rect width="16" height="16" fill="#fff"/><path d="M0.600 15.400L1.800 11.300 12.300 .8a1.200 1.200 0 0 1 1.700 0l1.200 1.200a1.200 1.200 0 0 1 0 1.700L4.700 14.200z" fill="#727272"/><path d="M11.200 1.900l2.900 2.900M2.600 10.500l2.900 2.900" stroke="#fff" stroke-width=".8"/></svg>
<div class="t" style="top:652px;font-size:12.8px;letter-spacing:0.034px;left:426.30px;color:#111;">Edited</div>
<div class="t" style="top:652px;font-size:12.8px;left:479.00px;color:#111;width:172px;overflow:hidden;">Allan Anthony</div>
<div class="t" style="top:652px;font-size:12.8px;left:655.50px;color:#111;width:111px;overflow:hidden;">Allan.Anthony@sygx2.onmicrosoft.com</div>
<svg class="a" style="left:770.8px;top:650.0px;" width="16" height="16" viewBox="0 0 16 16"><path d="M6.500 4.900h7.500M10.600 2.100l4 2.800-4 2.800" fill="none" stroke="#4a9e79" stroke-width="2.100" stroke-linejoin="miter"/><path d="M12 11H4M7.800 8.200L3.800 11l4 2.800" fill="none" stroke="#4a9e79" stroke-width="2.100"/></svg>
<div class="a" style="left:790px;top:645px;width:34px;height:27px;background:#f0f0f0;"></div>
<svg class="a" style="left:790px;top:652px;overflow:hidden;" width="10" height="13" viewBox="0 0 10 13"><rect x="-4.5" y="0.5" width="13" height="12" fill="#fdfdfd" stroke="#c4c4c4"/><rect x="-2.5" y="2.5" width="9" height="8" fill="none" stroke="#e9e9e9"/></svg>
<div class="a" style="left:824px;top:645px;width:175px;height:27px;background:#dafbda;"></div>
<div class="t" style="top:652px;font-size:12.8px;left:826.30px;color:#111;width:170.7px;overflow:hidden;">CN=Kaylyn Maxwell,OU=Accounts,DC=ytria,DC=local</div>
<div class="a" style="left:1000px;top:645px;width:175px;height:27px;background:#dafbda;"></div>
<div class="t" style="top:652px;font-size:12.8px;left:1002.30px;color:#111;width:170.7px;overflow:hidden;">Kaylyn Maxwell</div>
<div class="t" style="top:652px;font-size:12.8px;left:1178.30px;color:#111;width:170.7px;overflow:hidden;">Allan Anthony</div>
<div class="t" style="top:652px;font-size:12.8px;left:1354.30px;color:#111;width:170.7px;overflow:hidden;">Allan.Anthony@sygx2.onmicrosoft.com</div>
<div class="a" style="left:1528px;top:645px;width:175px;height:27px;background:#dafbda;"></div>
<div class="t" style="top:652px;font-size:12.8px;left:1530.30px;color:#111;width:170.7px;overflow:hidden;">Consulting</div>
<div class="a" style="left:1704px;top:645px;width:154px;height:27px;background:#dafbda;"></div>
<div class="t" style="top:652px;font-size:12.8px;left:1706.30px;color:#111;width:149.7px;overflow:hidden;">External consultant</div>
<div class="a" style="left:340px;top:672px;width:1518px;height:1px;background:#efefef;"></div>
<svg class="a" style="left:344px;top:679px;" width="14" height="14" viewBox="0 0 14 14"><circle cx="7" cy="7" r="6" fill="#fff" stroke="#6e6e6e" stroke-width="1.400"/><circle cx="7" cy="7" r="2.900" fill="#9a9a9a"/></svg>
<svg class="a" style="left:364px;top:679.1px;" width="14" height="14" viewBox="0 0 14 14"><path d="M0 13.900v-1.100c0-2 1.500-3.100 3.100-3.100 1.900 1.200 5.800 1.200 7.700 0 1.600 0 3.200 1.100 3.200 3.100v1.100z" fill="#2980b9"/><circle cx="6.950" cy="4.500" r="4.700" fill="#fff"/><circle cx="6.950" cy="4.500" r="4.150" fill="#2980b9"/></svg>
<div class="a" style="left:406px;top:673px;width:70px;height:27px;background:#dafbda;"></div>
<svg class="a" style="left:408px;top:678px;" width="16" height="16" viewBox="0 0 16 16"><rect width="16" height="16" fill="#fff"/><path d="M0.600 15.400L1.800 11.300 12.300 .8a1.200 1.200 0 0 1 1.700 0l1.200 1.200a1.200 1.200 0 0 1 0 1.700L4.700 14.200z" fill="#727272"/><path d="M11.200 1.900l2.900 2.900M2.600 10.500l2.900 2.900" stroke="#fff" stroke-width=".8"/></svg>
<div class="t" style="top:680px;font-size:12.8px;letter-spacing:0.034px;left:426.30px;color:#111;">Edited</div>
<div class="t" style="top:680px;font-size:12.8px;left:479.00px;color:#111;width:172px;overflow:hidden;">Alma Rivera</div>
<div class="t" style="top:680px;font-size:12.8px;left:655.50px;color:#111;width:111px;overflow:hidden;">Alma.Rivera@sygx2.onmicrosoft.com</div>
<svg class="a" style="left:770.8px;top:678.0px;" width="16" height="16" viewBox="0 0 16 16"><path d="M6.500 4.900h7.500M10.600 2.100l4 2.800-4 2.800" fill="none" stroke="#4a9e79" stroke-width="2.100" stroke-linejoin="miter"/><path d="M12 11H4M7.800 8.200L3.800 11l4 2.800" fill="none" stroke="#4a9e79" stroke-width="2.100"/></svg>
<div class="a" style="left:790px;top:673px;width:34px;height:27px;background:#f0f0f0;"></div>
<svg class="a" style="left:790px;top:680px;overflow:hidden;" width="10" height="13" viewBox="0 0 10 13"><rect x="-4.5" y="0.5" width="13" height="12" fill="#fdfdfd" stroke="#c4c4c4"/><rect x="-2.5" y="2.5" width="9" height="8" fill="none" stroke="#e9e9e9"/><path d="M-1 6.800l2.600 2.800L6.800 2.600" fill="none" stroke="#b9b9b9" stroke-width="1.700"/></svg>
<div class="a" style="left:824px;top:673px;width:175px;height:27px;background:#dafbda;"></div>
<div class="t" style="top:680px;font-size:12.8px;left:826.30px;color:#111;width:170.7px;overflow:hidden;">CN=Kaylyn Maxwell,OU=Accounts,DC=ytria,DC=local</div>
<div class="a" style="left:1000px;top:673px;width:175px;height:27px;background:#dafbda;"></div>
<div class="t" style="top:680px;font-size:12.8px;left:1002.30px;color:#111;width:170.7px;overflow:hidden;">Kaylyn Maxwell</div>
<div class="t" style="top:680px;font-size:12.8px;left:1178.30px;color:#111;width:170.7px;overflow:hidden;">Alma Rivera</div>
<div class="t" style="top:680px;font-size:12.8px;left:1354.30px;color:#111;width:170.7px;overflow:hidden;">Alma.Rivera@sygx2.onmicrosoft.com</div>
<div class="a" style="left:1528px;top:673px;width:175px;height:27px;background:#dafbda;"></div>
<div class="t" style="top:680px;font-size:12.8px;left:1530.30px;color:#111;width:170.7px;overflow:hidden;">Consulting</div>
<div class="a" style="left:1704px;top:673px;width:154px;height:27px;background:#dafbda;"></div>
<div class="t" style="top:680px;font-size:12.8px;left:1706.30px;color:#111;width:149.7px;overflow:hidden;">External consultant</div>
<div class="a" style="left:340px;top:700px;width:1518px;height:1px;background:#efefef;"></div>
<svg class="a" style="left:344px;top:707px;" width="14" height="14" viewBox="0 0 14 14"><circle cx="7" cy="7" r="6" fill="#fff" stroke="#6e6e6e" stroke-width="1.400"/><circle cx="7" cy="7" r="2.900" fill="#9a9a9a"/></svg>
<svg class="a" style="left:364px;top:707.1px;" width="14" height="14" viewBox="0 0 14 14"><path d="M0 13.900v-1.100c0-2 1.500-3.100 3.100-3.100 1.900 1.200 5.800 1.200 7.700 0 1.600 0 3.200 1.100 3.200 3.100v1.100z" fill="#2980b9"/><circle cx="6.950" cy="4.500" r="4.700" fill="#fff"/><circle cx="6.950" cy="4.500" r="4.150" fill="#2980b9"/></svg>
<div class="a" style="left:406px;top:701px;width:70px;height:27px;background:#dafbda;"></div>
<svg class="a" style="left:408px;top:706px;" width="16" height="16" viewBox="0 0 16 16"><rect width="16" height="16" fill="#fff"/><path d="M0.600 15.400L1.800 11.300 12.300 .8a1.200 1.200 0 0 1 1.700 0l1.200 1.200a1.200 1.200 0 0 1 0 1.700L4.700 14.200z" fill="#727272"/><path d="M11.200 1.900l2.900 2.900M2.600 10.500l2.900 2.900" stroke="#fff" stroke-width=".8"/></svg>
<div class="t" style="top:708px;font-size:12.8px;letter-spacing:0.034px;left:426.30px;color:#111;">Edited</div>
<div class="t" style="top:708px;font-size:12.8px;left:479.00px;color:#111;width:172px;overflow:hidden;">Alvin Harper</div>
<div class="t" style="top:708px;font-size:12.8px;left:655.50px;color:#111;width:111px;overflow:hidden;">Alvin.Harper@sygx2.onmicrosoft.com</div>
<svg class="a" style="left:770.8px;top:706.0px;" width="16" height="16" viewBox="0 0 16 16"><path d="M6.500 4.900h7.500M10.600 2.100l4 2.800-4 2.800" fill="none" stroke="#4a9e79" stroke-width="2.100" stroke-linejoin="miter"/><path d="M12 11H4M7.800 8.200L3.800 11l4 2.800" fill="none" stroke="#4a9e79" stroke-width="2.100"/></svg>
<div class="a" style="left:790px;top:701px;width:34px;height:27px;background:#f0f0f0;"></div>
<svg class="a" style="left:790px;top:708px;overflow:hidden;" width="10" height="13" viewBox="0 0 10 13"><rect x="-4.5" y="0.5" width="13" height="12" fill="#fdfdfd" stroke="#c4c4c4"/><rect x="-2.5" y="2.5" width="9" height="8" fill="none" stroke="#e9e9e9"/><path d="M-1 6.800l2.600 2.800L6.800 2.600" fill="none" stroke="#b9b9b9" stroke-width="1.700"/></svg>
<div class="a" style="left:824px;top:701px;width:175px;height:27px;background:#dafbda;"></div>
<div class="t" style="top:708px;font-size:12.8px;left:826.30px;color:#111;width:170.7px;overflow:hidden;">CN=Kaylyn Maxwell,OU=Accounts,DC=ytria,DC=local</div>
<div class="a" style="left:1000px;top:701px;width:175px;height:27px;background:#dafbda;"></div>
<div class="t" style="top:708px;font-size:12.8px;left:1002.30px;color:#111;width:170.7px;overflow:hidden;">Kaylyn Maxwell</div>
<div class="t" style="top:708px;font-size:12.8px;left:1178.30px;color:#111;width:170.7px;overflow:hidden;">Alvin Harper</div>
<div class="t" style="top:708px;font-size:12.8px;left:1354.30px;color:#111;width:170.7px;overflow:hidden;">Alvin.Harper@sygx2.onmicrosoft.com</div>
<div class="a" style="left:1528px;top:701px;width:175px;height:27px;background:#dafbda;"></div>
<div class="t" style="top:708px;font-size:12.8px;left:1530.30px;color:#111;width:170.7px;overflow:hidden;">Consulting</div>
<div class="a" style="left:1704px;top:701px;width:154px;height:27px;background:#dafbda;"></div>
<div class="t" style="top:708px;font-size:12.8px;left:1706.30px;color:#111;width:149.7px;overflow:hidden;">External consultant</div>
<div class="a" style="left:340px;top:728px;width:1518px;height:1px;background:#efefef;"></div>
<svg class="a" style="left:344px;top:735px;" width="14" height="14" viewBox="0 0 14 14"><circle cx="7" cy="7" r="6" fill="#fff" stroke="#6e6e6e" stroke-width="1.400"/><circle cx="7" cy="7" r="2.900" fill="#9a9a9a"/></svg>
<svg class="a" style="left:364px;top:735.1px;" width="14" height="14" viewBox="0 0 14 14"><path d="M0 13.900v-1.100c0-2 1.500-3.100 3.100-3.100 1.900 1.200 5.800 1.200 7.700 0 1.600 0 3.200 1.100 3.200 3.100v1.100z" fill="#2980b9"/><circle cx="6.950" cy="4.500" r="4.700" fill="#fff"/><circle cx="6.950" cy="4.500" r="4.150" fill="#2980b9"/></svg>
<div class="t" style="top:736px;font-size:12.8px;left:479.00px;color:#111;width:172px;overflow:hidden;">Amelie Gamble</div>
<div class="t" style="top:736px;font-size:12.8px;left:655.50px;color:#111;width:111px;overflow:hidden;">Amelie.Gamble@sygx2.onmicrosoft.com</div>
<svg class="a" style="left:770.8px;top:734.0px;" width="16" height="16" viewBox="0 0 16 16"><path d="M6.500 4.900h7.500M10.600 2.100l4 2.800-4 2.800" fill="none" stroke="#4a9e79" stroke-width="2.100" stroke-linejoin="miter"/><path d="M12 11H4M7.800 8.200L3.800 11l4 2.800" fill="none" stroke="#4a9e79" stroke-width="2.100"/></svg>
<div class="a" style="left:790px;top:729px;width:34px;height:27px;background:#f0f0f0;"></div>
<svg class="a" style="left:790px;top:736px;overflow:hidden;" width="10" height="13" viewBox="0 0 10 13"><rect x="-4.5" y="0.5" width="13" height="12" fill="#fdfdfd" stroke="#c4c4c4"/><rect x="-2.5" y="2.5" width="9" height="8" fill="none" stroke="#e9e9e9"/><path d="M-1 6.800l2.600 2.800L6.800 2.600" fill="none" stroke="#b9b9b9" stroke-width="1.700"/></svg>
<div class="t" style="top:736px;font-size:12.8px;left:826.30px;color:#111;width:170.7px;overflow:hidden;">CN=Alfred Welcome,OU=Accounts,DC=ytria,DC=local</div>
<div class="t" style="top:736px;font-size:12.8px;left:1002.30px;color:#111;width:170.7px;overflow:hidden;">Alfred Welcome</div>
<div class="t" style="top:736px;font-size:12.8px;left:1178.30px;color:#111;width:170.7px;overflow:hidden;">Amelie Gamble</div>
<div class="t" style="top:736px;font-size:12.8px;left:1354.30px;color:#111;width:170.7px;overflow:hidden;">Amelie.Gamble@sygx2.onmicrosoft.com</div>
<div class="t" style="top:736px;font-size:12.8px;left:1530.30px;color:#111;width:170.7px;overflow:hidden;">Sales</div>
<div class="t" style="top:736px;font-size:12.8px;left:1706.30px;color:#111;width:149.7px;overflow:hidden;">Customer success manager</div>
<div class="a" style="left:340px;top:756px;width:1518px;height:1px;background:#efefef;"></div>
<svg class="a" style="left:344px;top:763px;" width="14" height="14" viewBox="0 0 14 14"><circle cx="7" cy="7" r="6" fill="#fff" stroke="#6e6e6e" stroke-width="1.400"/><circle cx="7" cy="7" r="2.900" fill="#9a9a9a"/></svg>
<svg class="a" style="left:364px;top:763.1px;" width="14" height="14" viewBox="0 0 14 14"><path d="M0 13.900v-1.100c0-2 1.500-3.100 3.100-3.100 1.900 1.200 5.800 1.200 7.700 0 1.600 0 3.200 1.100 3.200 3.100v1.100z" fill="#2980b9"/><circle cx="6.950" cy="4.500" r="4.700" fill="#fff"/><circle cx="6.950" cy="4.500" r="4.150" fill="#2980b9"/></svg>
<div class="t" style="top:764px;font-size:12.8px;left:479.00px;color:#111;width:172px;overflow:hidden;">Amirah Sawyer</div>
<div class="t" style="top:764px;font-size:12.8px;left:655.50px;color:#111;width:111px;overflow:hidden;">Amirah.Sawyer@sygx2.onmicrosoft.com</div>
<svg class="a" style="left:770.8px;top:762.0px;" width="16" height="16" viewBox="0 0 16 16"><path d="M6.500 4.900h7.500M10.600 2.100l4 2.800-4 2.800" fill="none" stroke="#4a9e79" stroke-width="2.100" stroke-linejoin="miter"/><path d="M12 11H4M7.800 8.200L3.800 11l4 2.800" fill="none" stroke="#4a9e79" stroke-width="2.100"/></svg>
<div class="a" style="left:790px;top:757px;width:34px;height:27px;background:#f0f0f0;"></div>
<svg class="a" style="left:790px;top:764px;overflow:hidden;" width="10" height="13" viewBox="0 0 10 13"><rect x="-4.5" y="0.5" width="13" height="12" fill="#fdfdfd" stroke="#c4c4c4"/><rect x="-2.5" y="2.5" width="9" height="8" fill="none" stroke="#e9e9e9"/><path d="M-1 6.800l2.600 2.800L6.800 2.600" fill="none" stroke="#b9b9b9" stroke-width="1.700"/></svg>
<div class="t" style="top:764px;font-size:12.8px;left:826.30px;color:#111;width:170.7px;overflow:hidden;">CN=Alfred Welcome,OU=Accounts,DC=ytria,DC=local</div>
<div class="t" style="top:764px;font-size:12.8px;left:1002.30px;color:#111;width:170.7px;overflow:hidden;">Alfred Welcome</div>
<div class="t" style="top:764px;font-size:12.8px;left:1178.30px;color:#111;width:170.7px;overflow:hidden;">Amirah Sawyer</div>
<div class="t" style="top:764px;font-size:12.8px;left:1354.30px;color:#111;width:170.7px;overflow:hidden;">Amirah.Sawyer@old_domain.onmicrosoft.com</div>
<div class="t" style="top:764px;font-size:12.8px;left:1530.30px;color:#111;width:170.7px;overflow:hidden;">Production</div>
<div class="t" style="top:764px;font-size:12.8px;left:1706.30px;color:#111;width:149.7px;overflow:hidden;">Line manager</div>
<div class="a" style="left:340px;top:784px;width:1518px;height:1px;background:#efefef;"></div>
<svg class="a" style="left:344px;top:791px;" width="14" height="14" viewBox="0 0 14 14"><circle cx="7" cy="7" r="6" fill="#fff" stroke="#6e6e6e" stroke-width="1.400"/><circle cx="7" cy="7" r="2.900" fill="#9a9a9a"/></svg>
<svg class="a" style="left:364px;top:791.1px;" width="14" height="14" viewBox="0 0 14 14"><path d="M0 13.900v-1.100c0-2 1.500-3.100 3.100-3.100 1.900 1.200 5.800 1.200 7.700 0 1.600 0 3.200 1.100 3.200 3.100v1.100z" fill="#2980b9"/><circle cx="6.950" cy="4.500" r="4.700" fill="#fff"/><circle cx="6.950" cy="4.500" r="4.150" fill="#2980b9"/></svg>
<div class="t" style="top:792px;font-size:12.8px;left:479.00px;color:#111;width:172px;overflow:hidden;">Amy-Coco</div>
<div class="t" style="top:792px;font-size:12.8px;left:655.50px;color:#111;width:111px;overflow:hidden;">Coco.Amy@sygx2.onmicrosoft.com</div>
<svg class="a" style="left:770.8px;top:790.0px;" width="16" height="16" viewBox="0 0 16 16"><path d="M6.500 4.900h7.500M10.600 2.100l4 2.800-4 2.800" fill="none" stroke="#4a9e79" stroke-width="2.100" stroke-linejoin="miter"/><path d="M12 11H4M7.800 8.200L3.800 11l4 2.800" fill="none" stroke="#4a9e79" stroke-width="2.100"/></svg>
<div class="a" style="left:790px;top:785px;width:34px;height:27px;background:#f0f0f0;"></div>
<svg class="a" style="left:790px;top:792px;overflow:hidden;" width="10" height="13" viewBox="0 0 10 13"><rect x="-4.5" y="0.5" width="13" height="12" fill="#fdfdfd" stroke="#c4c4c4"/><rect x="-2.5" y="2.5" width="9" height="8" fill="none" stroke="#e9e9e9"/></svg>
<div class="a" style="left:824px;top:785px;width:175px;height:27px;background:#d6d6d6;"></div>
<div class="a" style="left:1000px;top:785px;width:175px;height:27px;background:#d6d6d6;"></div>
<div class="t" style="top:792px;font-size:12.8px;left:1178.30px;color:#111;width:170.7px;overflow:hidden;">Amy Coco</div>
<div class="t" style="top:792px;font-size:12.8px;left:1354.30px;color:#111;width:170.7px;overflow:hidden;">AmyC@M365x393550.OnMicrosoft.com</div>
<div class="t" style="top:792px;font-size:12.8px;left:1530.30px;color:#111;width:170.7px;overflow:hidden;">Sales</div>
<div class="t" style="top:792px;font-size:12.8px;left:1706.30px;color:#111;width:149.7px;overflow:hidden;">Genius Manager</div>
<div class="a" style="left:340px;top:812px;width:1518px;height:1px;background:#efefef;"></div>
<svg class="a" style="left:344px;top:819px;" width="14" height="14" viewBox="0 0 14 14"><circle cx="7" cy="7" r="6" fill="#fff" stroke="#6e6e6e" stroke-width="1.400"/><circle cx="7" cy="7" r="2.900" fill="#9a9a9a"/></svg>
<svg class="a" style="left:364px;top:819.1px;" width="14" height="14" viewBox="0 0 14 14"><path d="M0 13.900v-1.100c0-2 1.500-3.100 3.100-3.100 1.900 1.200 5.800 1.200 7.700 0 1.600 0 3.200 1.100 3.200 3.100v1.100z" fill="#2980b9"/><circle cx="6.950" cy="4.500" r="4.700" fill="#fff"/><circle cx="6.950" cy="4.500" r="4.150" fill="#2980b9"/></svg>
<div class="t" style="top:820px;font-size:12.8px;left:479.00px;color:#111;width:172px;overflow:hidden;">Anahi Fry</div>
<div class="t" style="top:820px;font-size:12.8px;left:655.50px;color:#111;width:111px;overflow:hidden;">Anahi.Fry@sygx2.onmicrosoft.com</div>
<svg class="a" style="left:770.8px;top:818.0px;" width="16" height="16" viewBox="0 0 16 16"><path d="M6.500 4.900h7.500M10.600 2.100l4 2.800-4 2.800" fill="none" stroke="#4a9e79" stroke-width="2.100" stroke-linejoin="miter"/><path d="M12 11H4M7.800 8.200L3.800 11l4 2.800" fill="none" stroke="#4a9e79" stroke-width="2.100"/></svg>
<div class="a" style="left:790px;top:813px;width:34px;height:27px;background:#f0f0f0;"></div>
<svg class="a" style="left:790px;top:820px;overflow:hidden;" width="10" height="13" viewBox="0 0 10 13"><rect x="-4.5" y="0.5" width="13" height="12" fill="#fdfdfd" stroke="#c4c4c4"/><rect x="-2.5" y="2.5" width="9" height="8" fill="none" stroke="#e9e9e9"/></svg>
<div class="t" style="top:820px;font-size:12.8px;left:826.30px;color:#111;width:170.7px;overflow:hidden;">CN=Alfred Welcome,OU=Accounts,DC=ytria,DC=local</div>
<div class="t" style="top:820px;font-size:12.8px;left:1002.30px;color:#111;width:170.7px;overflow:hidden;">Alfred Welcome</div>
<div class="t" style="top:820px;font-size:12.8px;left:1178.30px;color:#111;width:170.7px;overflow:hidden;">Anahi Fry</div>
<div class="t" style="top:820px;font-size:12.8px;left:1354.30px;color:#111;width:170.7px;overflow:hidden;">Anahi.Fry@sygx2.onmicrosoft.com</div>
<div class="t" style="top:820px;font-size:12.8px;left:1530.30px;color:#111;width:170.7px;overflow:hidden;">Marketing</div>
<div class="t" style="top:820px;font-size:12.8px;left:1706.30px;color:#111;width:149.7px;overflow:hidden;">Product manager</div>
<div class="a" style="left:340px;top:840px;width:1518px;height:1px;background:#efefef;"></div>
<svg class="a" style="left:344px;top:847px;" width="14" height="14" viewBox="0 0 14 14"><circle cx="7" cy="7" r="6" fill="#fff" stroke="#6e6e6e" stroke-width="1.400"/><circle cx="7" cy="7" r="2.900" fill="#9a9a9a"/></svg>
<svg class="a" style="left:364px;top:847.1px;" width="14" height="14" viewBox="0 0 14 14"><path d="M0 13.900v-1.100c0-2 1.500-3.100 3.100-3.100 1.900 1.200 5.800 1.200 7.700 0 1.600 0 3.200 1.100 3.200 3.100v1.100z" fill="#2980b9"/><circle cx="6.950" cy="4.500" r="4.700" fill="#fff"/><circle cx="6.950" cy="4.500" r="4.150" fill="#2980b9"/></svg>
<div class="t" style="top:848px;font-size:12.8px;left:479.00px;color:#111;width:172px;overflow:hidden;">Anastasia Frank</div>
<div class="t" style="top:848px;font-size:12.8px;left:655.50px;color:#111;width:111px;overflow:hidden;">Anastasia.Frank@sygx2.onmicrosoft.com</div>
<svg class="a" style="left:770.8px;top:846.0px;" width="16" height="16" viewBox="0 0 16 16"><path d="M6.500 4.900h7.500M10.600 2.100l4 2.800-4 2.800" fill="none" stroke="#4a9e79" stroke-width="2.100" stroke-linejoin="miter"/><path d="M12 11H4M7.800 8.200L3.800 11l4 2.800" fill="none" stroke="#4a9e79" stroke-width="2.100"/></svg>
<div class="a" style="left:790px;top:841px;width:34px;height:27px;background:#f0f0f0;"></div>
<svg class="a" style="left:790px;top:848px;overflow:hidden;" width="10" height="13" viewBox="0 0 10 13"><rect x="-4.5" y="0.5" width="13" height="12" fill="#fdfdfd" stroke="#c4c4c4"/><rect x="-2.5" y="2.5" width="9" height="8" fill="none" stroke="#e9e9e9"/></svg>
<div class="t" style="top:848px;font-size:12.8px;left:826.30px;color:#111;width:170.7px;overflow:hidden;">CN=Alfred Welcome,OU=Accounts,DC=ytria,DC=local</div>
<div class="t" style="top:848px;font-size:12.8px;left:1002.30px;color:#111;width:170.7px;overflow:hidden;">Alfred Welcome</div>
<div class="t" style="top:848px;font-size:12.8px;left:1178.30px;color:#111;width:170.7px;overflow:hidden;">Anastasia Frank</div>
<div class="t" style="top:848px;font-size:12.8px;left:1354.30px;color:#111;width:170.7px;overflow:hidden;">Anastasia.Frank@sygx2.onmicrosoft.com</div>
<div class="t" style="top:848px;font-size:12.8px;left:1530.30px;color:#111;width:170.7px;overflow:hidden;">Marketing</div>
<div class="t" style="top:848px;font-size:12.8px;left:1706.30px;color:#111;width:149.7px;overflow:hidden;">Account manager</div>
<div class="a" style="left:340px;top:868px;width:1518px;height:1px;background:#efefef;"></div>
<svg class="a" style="left:344px;top:875px;" width="14" height="14" viewBox="0 0 14 14"><circle cx="7" cy="7" r="6" fill="#fff" stroke="#6e6e6e" stroke-width="1.400"/><circle cx="7" cy="7" r="2.900" fill="#9a9a9a"/></svg>
<svg class="a" style="left:364px;top:875.1px;" width="14" height="14" viewBox="0 0 14 14"><path d="M0 13.900v-1.100c0-2 1.500-3.100 3.100-3.100 1.900 1.200 5.800 1.200 7.700 0 1.600 0 3.200 1.100 3.200 3.100v1.100z" fill="#2980b9"/><circle cx="6.950" cy="4.500" r="4.700" fill="#fff"/><circle cx="6.950" cy="4.500" r="4.150" fill="#2980b9"/></svg>
<div class="t" style="top:876px;font-size:12.8px;left:479.00px;color:#111;width:172px;overflow:hidden;">Annabelle Bentley</div>
<div class="t" style="top:876px;font-size:12.8px;left:655.50px;color:#111;width:111px;overflow:hidden;">Annabelle.Bentley@sygx2.onmicrosoft.com</div>
<svg class="a" style="left:770.8px;top:874.0px;" width="16" height="16" viewBox="0 0 16 16"><path d="M6.500 4.900h7.500M10.600 2.100l4 2.800-4 2.800" fill="none" stroke="#4a9e79" stroke-width="2.100" stroke-linejoin="miter"/><path d="M12 11H4M7.800 8.200L3.800 11l4 2.800" fill="none" stroke="#4a9e79" stroke-width="2.100"/></svg>
<div class="a" style="left:790px;top:869px;width:34px;height:27px;background:#f0f0f0;"></div>
<svg class="a" style="left:790px;top:876px;overflow:hidden;" width="10" height="13" viewBox="0 0 10 13"><rect x="-4.5" y="0.5" width="13" height="12" fill="#fdfdfd" stroke="#c4c4c4"/><rect x="-2.5" y="2.5" width="9" height="8" fill="none" stroke="#e9e9e9"/><path d="M-1 6.800l2.600 2.800L6.800 2.600" fill="none" stroke="#b9b9b9" stroke-width="1.700"/></svg>
<div class="t" style="top:876px;font-size:12.8px;left:826.30px;color:#111;width:170.7px;overflow:hidden;">CN=Alfred Welcome,OU=Accounts,DC=ytria,DC=local</div>
<div class="t" style="top:876px;font-size:12.8px;left:1002.30px;color:#111;width:170.7px;overflow:hidden;">Alfred Welcome</div>
<div class="t" style="top:876px;font-size:12.8px;left:1178.30px;color:#111;width:170.7px;overflow:hidden;">Annabelle Bentley</div>
<div class="t" style="top:876px;font-size:12.8px;left:1354.30px;color:#111;width:170.7px;overflow:hidden;">Annabelle.Bentley@sygx2.onmicrosoft.com</div>
<div class="t" style="top:876px;font-size:12.8px;left:1530.30px;color:#111;width:170.7px;overflow:hidden;">Operations</div>
<div class="t" style="top:876px;font-size:12.8px;left:1706.30px;color:#111;width:149.7px;overflow:hidden;">Software programmer</div>
<div class="a" style="left:340px;top:896px;width:1518px;height:1px;background:#efefef;"></div>
<svg class="a" style="left:344px;top:903px;" width="14" height="14" viewBox="0 0 14 14"><circle cx="7" cy="7" r="6" fill="#fff" stroke="#6e6e6e" stroke-width="1.400"/><circle cx="7" cy="7" r="2.900" fill="#9a9a9a"/></svg>
<svg class="a" style="left:364px;top:903.1px;" width="14" height="14" viewBox="0 0 14 14"><path d="M0 13.900v-1.100c0-2 1.500-3.100 3.100-3.100 1.900 1.200 5.800 1.200 7.700 0 1.600 0 3.200 1.100 3.200 3.100v1.100z" fill="#2980b9"/><circle cx="6.950" cy="4.500" r="4.700" fill="#fff"/><circle cx="6.950" cy="4.500" r="4.150" fill="#2980b9"/></svg>
<div class="t" style="top:904px;font-size:12.8px;left:479.00px;color:#111;width:172px;overflow:hidden;">Ariana Kisher</div>
<div class="t" style="top:904px;font-size:12.8px;left:655.50px;color:#111;width:111px;overflow:hidden;">Ariana-Kisher@ovh.ytria.io</div>
<svg class="a" style="left:770.8px;top:902.0px;" width="16" height="16" viewBox="0 0 16 16"><path d="M6.500 4.900h7.500M10.600 2.100l4 2.800-4 2.800" fill="none" stroke="#4a9e79" stroke-width="2.100" stroke-linejoin="miter"/><path d="M12 11H4M7.800 8.200L3.800 11l4 2.800" fill="none" stroke="#4a9e79" stroke-width="2.100"/></svg>
<div class="a" style="left:790px;top:897px;width:34px;height:27px;background:#f0f0f0;"></div>
<svg class="a" style="left:790px;top:904px;overflow:hidden;" width="10" height="13" viewBox="0 0 10 13"><rect x="-4.5" y="0.5" width="13" height="12" fill="#fdfdfd" stroke="#c4c4c4"/><rect x="-2.5" y="2.5" width="9" height="8" fill="none" stroke="#e9e9e9"/></svg>
<div class="t" style="top:904px;font-size:12.8px;left:826.30px;color:#111;width:170.7px;overflow:hidden;">CN=Alfred Welcome,OU=Accounts,DC=ytria,DC=local</div>
<div class="t" style="top:904px;font-size:12.8px;left:1002.30px;color:#111;width:170.7px;overflow:hidden;">Alfred Welcome</div>
<div class="t" style="top:904px;font-size:12.8px;left:1178.30px;color:#111;width:170.7px;overflow:hidden;">Ariana Kisher</div>
<div class="t" style="top:904px;font-size:12.8px;left:1354.30px;color:#111;width:170.7px;overflow:hidden;">Ariana-Kisher@ovh.ytria.io</div>
<div class="t" style="top:904px;font-size:12.8px;left:1530.30px;color:#111;width:170.7px;overflow:hidden;">Marketing</div>
<div class="t" style="top:904px;font-size:12.8px;left:1706.30px;color:#111;width:149.7px;overflow:hidden;">Product manager</div>
<div class="a" style="left:340px;top:924px;width:1518px;height:1px;background:#efefef;"></div>
<svg class="a" style="left:344px;top:931px;" width="14" height="14" viewBox="0 0 14 14"><circle cx="7" cy="7" r="6" fill="#fff" stroke="#6e6e6e" stroke-width="1.400"/><circle cx="7" cy="7" r="2.900" fill="#9a9a9a"/></svg>
<svg class="a" style="left:364px;top:931.1px;" width="14" height="14" viewBox="0 0 14 14"><path d="M0 13.900v-1.100c0-2 1.500-3.100 3.100-3.100 1.900 1.200 5.800 1.200 7.700 0 1.600 0 3.200 1.100 3.200 3.100v1.100z" fill="#2980b9"/><circle cx="6.950" cy="4.500" r="4.700" fill="#fff"/><circle cx="6.950" cy="4.500" r="4.150" fill="#2980b9"/></svg>
<div class="t" style="top:932px;font-size:12.8px;left:479.00px;color:#111;width:172px;overflow:hidden;">Boris Four 3651</div>
<div class="t" style="top:932px;font-size:12.8px;left:655.50px;color:#111;width:111px;overflow:hidden;">borisfour3651@ovh.ytria.io</div>
<svg class="a" style="left:770.8px;top:930.0px;" width="16" height="16" viewBox="0 0 16 16"><path d="M6.500 4.900h7.500M10.600 2.100l4 2.800-4 2.800" fill="none" stroke="#4a9e79" stroke-width="2.100" stroke-linejoin="miter"/><path d="M12 11H4M7.800 8.200L3.800 11l4 2.800" fill="none" stroke="#4a9e79" stroke-width="2.100"/></svg>
<div class="a" style="left:790px;top:925px;width:34px;height:27px;background:#f0f0f0;"></div>
<svg class="a" style="left:790px;top:932px;overflow:hidden;" width="10" height="13" viewBox="0 0 10 13"><rect x="-4.5" y="0.5" width="13" height="12" fill="#fdfdfd" stroke="#c4c4c4"/><rect x="-2.5" y="2.5" width="9" height="8" fill="none" stroke="#e9e9e9"/></svg>
<div class="t" style="top:932px;font-size:12.8px;left:826.30px;color:#111;width:170.7px;overflow:hidden;">CN=Alfred Welcome,OU=Accounts,DC=ytria,DC=local</div>
<div class="t" style="top:932px;font-size:12.8px;left:1002.30px;color:#111;width:170.7px;overflow:hidden;">Alfred Welcome</div>
<div class="t" style="top:932px;font-size:12.8px;left:1178.30px;color:#111;width:170.7px;overflow:hidden;">Boris Four 3651</div>
<div class="t" style="top:932px;font-size:12.8px;left:1354.30px;color:#111;width:170.7px;overflow:hidden;">borisfour3651@ovh.ytria.io</div>
<div class="t" style="top:932px;font-size:12.8px;left:1530.30px;color:#111;width:170.7px;overflow:hidden;">Testing</div>
<div class="a" style="left:1704px;top:925px;width:154px;height:27px;background:#d6d6d6;"></div>
<div class="a" style="left:340px;top:952px;width:1518px;height:1px;background:#efefef;"></div>
<svg class="a" style="left:344px;top:959px;" width="14" height="14" viewBox="0 0 14 14"><circle cx="7" cy="7" r="6" fill="#fff" stroke="#6e6e6e" stroke-width="1.400"/><circle cx="7" cy="7" r="2.900" fill="#9a9a9a"/></svg>
<svg class="a" style="left:364px;top:959.1px;" width="14" height="14" viewBox="0 0 14 14"><path d="M0 13.900v-1.100c0-2 1.500-3.100 3.100-3.100 1.900 1.200 5.800 1.200 7.700 0 1.600 0 3.200 1.100 3.200 3.100v1.100z" fill="#2980b9"/><circle cx="6.950" cy="4.500" r="4.700" fill="#fff"/><circle cx="6.950" cy="4.500" r="4.150" fill="#2980b9"/></svg>
<div class="t" style="top:960px;font-size:12.8px;left:479.00px;color:#111;width:172px;overflow:hidden;">Braylon Rollins</div>
<div class="t" style="top:960px;font-size:12.8px;left:655.50px;color:#111;width:111px;overflow:hidden;">Braylon.Rollins@sygx2.onmicrosoft.com</div>
<svg class="a" style="left:770.8px;top:958.0px;" width="16" height="16" viewBox="0 0 16 16"><path d="M6.500 4.900h7.500M10.600 2.100l4 2.800-4 2.800" fill="none" stroke="#4a9e79" stroke-width="2.100" stroke-linejoin="miter"/><path d="M12 11H4M7.800 8.200L3.800 11l4 2.800" fill="none" stroke="#4a9e79" stroke-width="2.100"/></svg>
<div class="a" style="left:790px;top:953px;width:34px;height:27px;background:#f0f0f0;"></div>
<svg class="a" style="left:790px;top:960px;overflow:hidden;" width="10" height="13" viewBox="0 0 10 13"><rect x="-4.5" y="0.5" width="13" height="12" fill="#fdfdfd" stroke="#c4c4c4"/><rect x="-2.5" y="2.5" width="9" height="8" fill="none" stroke="#e9e9e9"/><path d="M-1 6.800l2.600 2.800L6.800 2.600" fill="none" stroke="#b9b9b9" stroke-width="1.700"/></svg>
<div class="t" style="top:960px;font-size:12.8px;left:826.30px;color:#111;width:170.7px;overflow:hidden;">CN=Alfred Welcome,OU=Accounts,DC=ytria,DC=local</div>
<div class="t" style="top:960px;font-size:12.8px;left:1002.30px;color:#111;width:170.7px;overflow:hidden;">Alfred Welcome</div>
<div class="t" style="top:960px;font-size:12.8px;left:1178.30px;color:#111;width:170.7px;overflow:hidden;">Braylon Rollins</div>
<div class="t" style="top:960px;font-size:12.8px;left:1354.30px;color:#111;width:170.7px;overflow:hidden;">Braylon.Rollins@old_domain.onmicrosoft.com</div>
<div class="t" style="top:960px;font-size:12.8px;left:1530.30px;color:#111;width:170.7px;overflow:hidden;">IT</div>
<div class="t" style="top:960px;font-size:12.8px;left:1706.30px;color:#111;width:149.7px;overflow:hidden;">Helpdesk</div>
<div class="a" style="left:340px;top:980px;width:1518px;height:1px;background:#efefef;"></div>
<svg class="a" style="left:344px;top:987px;" width="14" height="14" viewBox="0 0 14 14"><circle cx="7" cy="7" r="6" fill="#fff" stroke="#6e6e6e" stroke-width="1.400"/><circle cx="7" cy="7" r="2.900" fill="#9a9a9a"/></svg>
<svg class="a" style="left:364px;top:987.1px;" width="14" height="14" viewBox="0 0 14 14"><path d="M0 13.900v-1.100c0-2 1.500-3.100 3.100-3.100 1.900 1.200 5.800 1.200 7.700 0 1.600 0 3.200 1.100 3.200 3.100v1.100z" fill="#2980b9"/><circle cx="6.950" cy="4.500" r="4.700" fill="#fff"/><circle cx="6.950" cy="4.500" r="4.150" fill="#2980b9"/></svg>
<div class="t" style="top:988px;font-size:12.8px;left:479.00px;color:#111;width:172px;overflow:hidden;">Brenden Brown</div>
<div class="t" style="top:988px;font-size:12.8px;left:655.50px;color:#111;width:111px;overflow:hidden;">Brenden.Brown@sygx2.onmicrosoft.com</div>
<svg class="a" style="left:770.8px;top:986.0px;" width="16" height="16" viewBox="0 0 16 16"><path d="M6.500 4.900h7.500M10.600 2.100l4 2.800-4 2.800" fill="none" stroke="#4a9e79" stroke-width="2.100" stroke-linejoin="miter"/><path d="M12 11H4M7.800 8.200L3.800 11l4 2.800" fill="none" stroke="#4a9e79" stroke-width="2.100"/></svg>
<div class="a" style="left:790px;top:981px;width:34px;height:27px;background:#f0f0f0;"></div>
<svg class="a" style="left:790px;top:988px;overflow:hidden;" width="10" height="13" viewBox="0 0 10 13"><rect x="-4.5" y="0.5" width="13" height="12" fill="#fdfdfd" stroke="#c4c4c4"/><rect x="-2.5" y="2.5" width="9" height="8" fill="none" stroke="#e9e9e9"/><path d="M-1 6.800l2.600 2.800L6.800 2.600" fill="none" stroke="#b9b9b9" stroke-width="1.700"/></svg>
<div class="t" style="top:988px;font-size:12.8px;left:826.30px;color:#111;width:170.7px;overflow:hidden;">CN=Alfred Welcome,OU=Accounts,DC=ytria,DC=local</div>
<div class="t" style="top:988px;font-size:12.8px;left:1002.30px;color:#111;width:170.7px;overflow:hidden;">Alfred Welcome</div>
<div class="t" style="top:988px;font-size:12.8px;left:1178.30px;color:#111;width:170.7px;overflow:hidden;">Brenden Brown</div>
<div class="t" style="top:988px;font-size:12.8px;left:1354.30px;color:#111;width:170.7px;overflow:hidden;">Brenden.Brown@sygx2.onmicrosoft.com</div>
<div class="t" style="top:988px;font-size:12.8px;left:1530.30px;color:#111;width:170.7px;overflow:hidden;">Finance</div>
<div class="t" style="top:988px;font-size:12.8px;left:1706.30px;color:#111;width:149.7px;overflow:hidden;">Accountant</div>
<div class="a" style="left:340px;top:1008px;width:1518px;height:1px;background:#efefef;"></div>
<svg class="a" style="left:344px;top:1015px;" width="14" height="14" viewBox="0 0 14 14"><circle cx="7" cy="7" r="6" fill="#fff" stroke="#6e6e6e" stroke-width="1.400"/><circle cx="7" cy="7" r="2.900" fill="#9a9a9a"/></svg>
<svg class="a" style="left:364px;top:1015.1px;" width="14" height="14" viewBox="0 0 14 14"><path d="M0 13.900v-1.100c0-2 1.500-3.100 3.100-3.100 1.900 1.200 5.800 1.200 7.700 0 1.600 0 3.200 1.100 3.200 3.100v1.100z" fill="#2980b9"/><circle cx="6.950" cy="4.500" r="4.700" fill="#fff"/><circle cx="6.950" cy="4.500" r="4.150" fill="#2980b9"/></svg>
<div class="t" style="top:1016px;font-size:12.8px;left:479.00px;color:#111;width:172px;overflow:hidden;">Brett Mcintosh</div>
<div class="t" style="top:1016px;font-size:12.8px;left:655.50px;color:#111;width:111px;overflow:hidden;">Brett.Mcintosh@sygx2.onmicrosoft.com</div>
<svg class="a" style="left:770.8px;top:1014.0px;" width="16" height="16" viewBox="0 0 16 16"><path d="M6.500 4.900h7.500M10.600 2.100l4 2.800-4 2.800" fill="none" stroke="#4a9e79" stroke-width="2.100" stroke-linejoin="miter"/><path d="M12 11H4M7.800 8.200L3.800 11l4 2.800" fill="none" stroke="#4a9e79" stroke-width="2.100"/></svg>
<div class="a" style="left:790px;top:1009px;width:34px;height:27px;background:#f0f0f0;"></div>
<svg class="a" style="left:790px;top:1016px;overflow:hidden;" width="10" height="13" viewBox="0 0 10 13"><rect x="-4.5" y="0.5" width="13" height="12" fill="#fdfdfd" stroke="#c4c4c4"/><rect x="-2.5" y="2.5" width="9" height="8" fill="none" stroke="#e9e9e9"/><path d="M-1 6.800l2.600 2.800L6.800 2.600" fill="none" stroke="#b9b9b9" stroke-width="1.700"/></svg>
<div class="t" style="top:1016px;font-size:12.8px;left:826.30px;color:#111;width:170.7px;overflow:hidden;">CN=Alfred Welcome,OU=Accounts,DC=ytria,DC=local</div>
<div class="t" style="top:1016px;font-size:12.8px;left:1002.30px;color:#111;width:170.7px;overflow:hidden;">Alfred Welcome</div>
<div class="t" style="top:1016px;font-size:12.8px;left:1178.30px;color:#111;width:170.7px;overflow:hidden;">Brett Mcintosh</div>
<div class="t" style="top:1016px;font-size:12.8px;left:1354.30px;color:#111;width:170.7px;overflow:hidden;">Brett.Mcintosh@sygx2.onmicrosoft.com</div>
<div class="t" style="top:1016px;font-size:12.8px;left:1530.30px;color:#111;width:170.7px;overflow:hidden;">Engineering</div>
<div class="t" style="top:1016px;font-size:12.8px;left:1706.30px;color:#111;width:149.7px;overflow:hidden;">Engineer</div>
<div class="a" style="left:340px;top:336px;width:1px;height:684px;background:rgba(225,225,225,.55);"></div>
<div class="a" style="left:360px;top:336px;width:1px;height:684px;background:rgba(225,225,225,.55);"></div>
<div class="a" style="left:380px;top:336px;width:1px;height:684px;background:rgba(225,225,225,.55);"></div>
<div class="a" style="left:405px;top:336px;width:1px;height:684px;background:rgba(225,225,225,.55);"></div>
<div class="a" style="left:476px;top:336px;width:1px;height:684px;background:rgba(225,225,225,.55);"></div>
<div class="a" style="left:823px;top:336px;width:1px;height:684px;background:rgba(225,225,225,.55);"></div>
<div class="a" style="left:999px;top:336px;width:1px;height:684px;background:rgba(225,225,225,.55);"></div>
<div class="a" style="left:1175px;top:336px;width:1px;height:684px;background:rgba(225,225,225,.55);"></div>
<div class="a" style="left:1351px;top:336px;width:1px;height:684px;background:rgba(225,225,225,.55);"></div>
<div class="a" style="left:1527px;top:336px;width:1px;height:684px;background:rgba(225,225,225,.55);"></div>
<div class="a" style="left:1703px;top:336px;width:1px;height:684px;background:rgba(225,225,225,.55);"></div>
<div class="a" style="left:653px;top:252px;width:1.3px;height:768px;background:#0a78d6;"></div>
<div class="a" style="left:768px;top:220px;width:1.3px;height:800px;background:#0a78d6;"></div>
<div class="a" style="left:788.5px;top:336px;width:1.5px;height:684px;background:#22365c;"></div>
<div class="a" style="left:322px;top:1020px;width:1553px;height:17px;background:#fff;"></div>
<svg class="a" style="left:328px;top:1023px;" width="8" height="11" viewBox="0 0 8 11"><path d="M7 0.5v10L1 5.5z" fill="#3a4a6a"/></svg>
<svg class="a" style="left:1844px;top:1023px;" width="8" height="11" viewBox="0 0 8 11"><path d="M1 0.5v10L7 5.5z" fill="#3a4a6a"/></svg>
<div class="a" style="left:1133px;top:1022px;width:694px;height:13px;background:#8f8f8f;"></div>
<div class="a" style="left:1858px;top:187px;width:17px;height:850px;background:linear-gradient(90deg,#f0f0f0,#fdfdfd);"></div>
<svg class="a" style="left:1861.8px;top:193px;" width="9.2" height="5" viewBox="0 0 9.2 5"><path d="M0 5h9.200L4.600 0z" fill="#3a4a6a"/></svg>
<svg class="a" style="left:1861.8px;top:1009px;" width="9.2" height="5" viewBox="0 0 9.2 5"><path d="M0 0h9.200L4.600 5z" fill="#3a4a6a"/></svg>
<div class="a" style="left:1859.5px;top:204.5px;width:14px;height:172px;background:#8e8e8e;"></div>
<div class="a" style="left:302px;top:188px;width:19px;height:849px;background:#955ea5;"></div>
<div class="a" style="left:321px;top:188px;width:1px;height:849px;background:#c9b3d1;"></div>
<svg class="a" style="left:306px;top:604px;" width="10" height="16" viewBox="0 0 10 16"><path d="M8 1.5L2 8l6 6.5" fill="none" stroke="#fff" stroke-width="1.6"/></svg>
<div class="a" style="left:1875px;top:187px;width:43px;height:850px;background:#955ea5;"></div>
<svg class="a" style="left:1879px;top:196px;" width="34" height="26" viewBox="0 0 34 26"><path d="M7.600 7.500L2 13l5.600 5.500" fill="none" stroke="#fff" stroke-width="2.100"/><rect x="13.700" y="1.700" width="17.500" height="22.500" fill="none" stroke="#fff" stroke-width="1.500"/><path d="M16.300 6.300h1.500M20 6.300h8M16.300 10.800h1.500M20 10.800h7M16.300 15.300h1.500M20 15.300h4M16.300 19.800h1.500M20 19.800h8" stroke="#fff" stroke-width="1.300"/></svg>
<div class="a" style="left:346px;top:127px;width:300px;height:91.5px;background:#fff;border:1px solid #c6c6c6;box-shadow:3px 3px 2.500px rgba(0,0,0,.6);"></div>
<div class="a" style="left:348px;top:195px;width:296px;height:22px;background:#e3d3e8;"></div>
<svg class="a" style="left:352px;top:132px;" width="16" height="16" viewBox="0 0 16 16"><rect x="0" y="0" width="11" height="15.600" rx="2.500" fill="#626262"/><path d="M2.200 3.300h6.400" stroke="#fff" stroke-width="1.200"/><path d="M2.500 10.300h5M2.500 12.600h5" stroke="#fff" stroke-width="1.100"/><path d="M10.850 4h2.300v5.300l3.050-3v2.200L12 12.800 7.800 8.500v-2.200l3.050 3z" fill="#336fb3" stroke="#fff" stroke-width=".9" paint-order="stroke"/><rect x="7.800" y="14.700" width="8.400" height="1.300" fill="#336fb3"/></svg>
<div class="t" style="top:132px;font-size:12px;letter-spacing:-0.079px;left:381.00px;color:#3a3a3a;">On-prem users</div>
<svg class="a" style="left:352px;top:154px;" width="16" height="16" viewBox="0 0 16 16"><path d="M10.600 3.200A5.800 5.800 0 1 0 12.800 9" fill="none" stroke="#4a9e79" stroke-width="1.900"/><path d="M7.600 5h6.200V-.8z" fill="#4a9e79"/><circle cx="12" cy="10.300" r="2.500" fill="#336fb3" stroke="#fff" stroke-width=".7"/><path d="M7.800 16.200c0-2.800 1.800-3.800 4.200-3.800s4.200 1 4.200 3.800z" fill="#336fb3" stroke="#fff" stroke-width=".7"/></svg>
<div class="t" style="top:154px;font-size:12px;letter-spacing:-0.164px;left:381.00px;color:#3a3a3a;">Reload selected on-prem users</div>
<svg class="a" style="left:352px;top:176px;" width="16" height="16" viewBox="0 0 16 16"><rect x="0" y="0" width="11" height="15.600" rx="2.500" fill="#626262"/><path d="M2.200 3.300h6.400" stroke="#fff" stroke-width="1.200"/><path d="M2.500 10.300h5M2.500 12.600h5" stroke="#fff" stroke-width="1.100"/><path d="M10.850 4h2.300v5.300l3.050-3v2.200L12 12.800 7.800 8.500v-2.200l3.050 3z" fill="#336fb3" stroke="#fff" stroke-width=".9" paint-order="stroke"/><rect x="7.800" y="14.700" width="8.400" height="1.300" fill="#336fb3"/></svg>
<div class="t" style="top:176px;font-size:12px;letter-spacing:-0.069px;left:381.00px;color:#3a3a3a;">Select on-prem users attributes list and load</div>
<svg class="a" style="left:352px;top:198px;" width="16" height="16" viewBox="0 0 16 16"><path d="M5 5.500h9M11 1.800l4.300 3.700L11 9.200" fill="none" stroke="#4a9e79" stroke-width="2.100"/><path d="M11 11H2M5 7.300L.7 11 5 14.700" fill="none" stroke="#4a9e79" stroke-width="2.100"/></svg>
<div class="t" style="top:198px;font-size:12px;letter-spacing:0.043px;left:381.00px;color:#3a3a3a;">Sync cloud/on-premises</div>
<div class="a" style="left:392px;top:405px;width:1456px;height:333px;border:5px solid #ff1fa5;filter:drop-shadow(1.500px 3px 2.200px rgba(0,0,0,.5));"></div>
</body></html>
